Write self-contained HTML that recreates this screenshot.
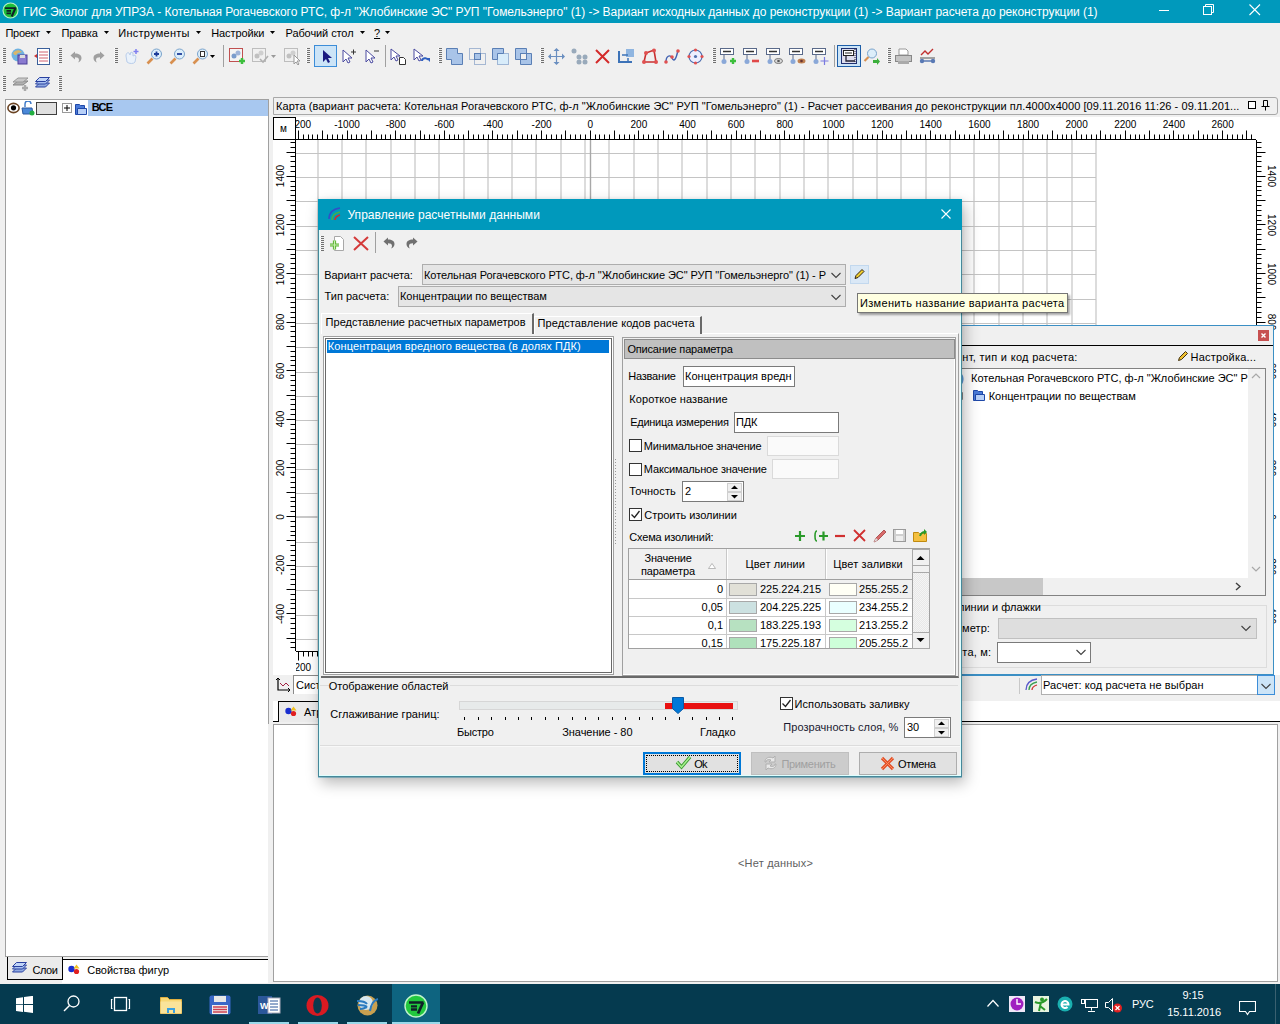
<!DOCTYPE html>
<html><head><meta charset="utf-8"><style>
html,body{margin:0;padding:0}
body{width:1280px;height:1024px;position:relative;overflow:hidden;background:#f0f0f0;font-family:"Liberation Sans",sans-serif;font-size:11px;color:#000}
body>div{position:absolute}
.t{position:absolute;white-space:pre}
</style></head><body>
<div style="left:0px;top:0px;width:1280px;height:23px;background:#0099bc"></div>
<svg style="position:absolute;left:1.5px;top:2px;" width="17" height="17" viewBox="0 0 17 17"><circle cx="8.5" cy="8.5" r="7.5" fill="#1dbf3a" stroke="#b8f0c8" stroke-width="1.1"/><path d="M3 6.2h11M4.5 8.9h4.5M4.5 11.3h4.5" stroke="#102028" stroke-width="1.7"/><path d="M13.5 6l-3.8 8.5" stroke="#102028" stroke-width="2.1"/></svg>
<div class="t " style="left:23px;top:5.84px;font-size:12px;line-height:12px;letter-spacing:-0.059px;color:#fff">ГИС Эколог для УПРЗА - Котельная Рогачевского РТС, ф-л &quot;Жлобинские ЭС&quot; РУП &quot;Гомельэнерго&quot; (1) -&gt; Вариант исходных данных до реконструкции (1) -&gt; Вариант расчета до реконструкции (1)</div>
<div style="left:1159px;top:10px;width:10px;height:1px;background:#fff"></div>
<svg style="position:absolute;left:1203px;top:4px;" width="12" height="12" viewBox="0 0 12 12"><rect x="0.5" y="2.5" width="8" height="8" fill="none" stroke="#fff"/><path d="M2.5 2.5V0.5h8v8h-2" fill="none" stroke="#fff"/></svg>
<svg style="position:absolute;left:1249px;top:4px;" width="12" height="12" viewBox="0 0 12 12"><path d="M0.5 0.5L11 11M11 0.5L0.5 11" stroke="#fff" stroke-width="1.1"/></svg>
<div class="t " style="left:5.5px;top:27.69px;font-size:11px;line-height:11px;letter-spacing:-0.322px;">Проект</div>
<svg style="position:absolute;left:46px;top:31px;" width="5" height="3" viewBox="0 0 5 3"><path d="M0 0h5L2.5 3z" fill="#000"/></svg>
<div class="t " style="left:61.4px;top:27.69px;font-size:11px;line-height:11px;letter-spacing:-0.145px;">Правка</div>
<svg style="position:absolute;left:104px;top:31px;" width="5" height="3" viewBox="0 0 5 3"><path d="M0 0h5L2.5 3z" fill="#000"/></svg>
<div class="t " style="left:118.3px;top:27.69px;font-size:11px;line-height:11px;letter-spacing:0.264px;">Инструменты</div>
<svg style="position:absolute;left:196px;top:31px;" width="5" height="3" viewBox="0 0 5 3"><path d="M0 0h5L2.5 3z" fill="#000"/></svg>
<div class="t " style="left:211.2px;top:27.69px;font-size:11px;line-height:11px;letter-spacing:-0.093px;">Настройки</div>
<svg style="position:absolute;left:270px;top:31px;" width="5" height="3" viewBox="0 0 5 3"><path d="M0 0h5L2.5 3z" fill="#000"/></svg>
<div class="t " style="left:285.5px;top:27.69px;font-size:11px;line-height:11px;letter-spacing:-0.089px;">Рабочий стол</div>
<svg style="position:absolute;left:359.5px;top:31px;" width="5" height="3" viewBox="0 0 5 3"><path d="M0 0h5L2.5 3z" fill="#000"/></svg>
<div class="t " style="left:374px;top:27.69px;font-size:11px;line-height:11px;text-decoration:underline">?</div>
<svg style="position:absolute;left:385px;top:31px;" width="5" height="3" viewBox="0 0 5 3"><path d="M0 0h5L2.5 3z" fill="#000"/></svg>
<div style="left:3px;top:48px;width:3px;height:15px;background:repeating-linear-gradient(#707070 0 1px,transparent 1px 2px)"></div>
<div style="left:2px;top:48px;width:1px;height:15px;background:repeating-linear-gradient(#ffffff 0 1px,transparent 1px 2px)"></div>
<svg style="position:absolute;left:11px;top:48px;" width="17" height="17" viewBox="0 0 17 17"><circle cx="7" cy="7" r="6.5" fill="#6fb2e0"/><path d="M2 5c2-3 6-4 9-1-2 1-4 0-5 2s-3 1-4-1z" fill="#d9b66a"/><rect x="7" y="7" width="9" height="9" fill="#8a7ad0" stroke="#4a3e99"/><rect x="9" y="7" width="5" height="3" fill="#ddd"/></svg>
<svg style="position:absolute;left:34px;top:48px;" width="17" height="17" viewBox="0 0 17 17"><rect x="3.5" y="0.5" width="12" height="16" fill="#fff" stroke="#3a5f9a"/><path d="M5 4h9M5 7h9M5 10h9M5 13h9" stroke="#d06070"/><path d="M0 8l3-2v4z" fill="#c33"/></svg>
<div style="left:59px;top:48px;width:3px;height:15px;background:repeating-linear-gradient(#707070 0 1px,transparent 1px 2px)"></div>
<div style="left:58px;top:48px;width:1px;height:15px;background:repeating-linear-gradient(#ffffff 0 1px,transparent 1px 2px)"></div>
<svg style="position:absolute;left:70px;top:51px;" width="12" height="12" viewBox="0 0 12 12"><path d="M5 0.5L0.5 4.5 5 8.5V6.2c2.5 0 4 0.6 4 2.8 0 1-0.5 2-1.2 2.5 3-0.8 3.7-3 3.7-4.5 0-3-2.5-4.5-6.5-4.5z" fill="#a0a0a0"/></svg>
<svg style="position:absolute;left:93px;top:51px;" width="12" height="12" viewBox="0 0 12 12"><path d="M7 0.5l4.5 4L7 8.5V6.2c-2.5 0-4 0.6-4 2.8 0 1 0.5 2 1.2 2.5-3-0.8-3.7-3-3.7-4.5 0-3 2.5-4.5 6.5-4.5z" fill="#a0a0a0"/></svg>
<div style="left:115px;top:48px;width:3px;height:15px;background:repeating-linear-gradient(#707070 0 1px,transparent 1px 2px)"></div>
<div style="left:114px;top:48px;width:1px;height:15px;background:repeating-linear-gradient(#ffffff 0 1px,transparent 1px 2px)"></div>
<svg style="position:absolute;left:123px;top:48px;" width="17" height="17" viewBox="0 0 17 17"><path d="M3 8c0-3 2-4 3-3l1 2 1-3 2 1v3l2-1 1 2-1 5c-1 2-6 2-8 0z" fill="#eaf2fb" stroke="#b9cdea"/><path d="M13 1v5M10.5 3.5h5" stroke="#7f7ff0" stroke-width="1.5"/></svg>
<svg style="position:absolute;left:146px;top:48px;" width="17" height="17" viewBox="0 0 17 17"><path d="M1.5 15.5l5-5" stroke="#d89050" stroke-width="2.6"/><circle cx="10.5" cy="6" r="5" fill="#dceefa" stroke="#7aa3cc"/><path d="M8 6h5M10.5 3.5v5" stroke="#1d3d99" stroke-width="1.8"/></svg>
<svg style="position:absolute;left:169px;top:48px;" width="17" height="17" viewBox="0 0 17 17"><path d="M1.5 15.5l5-5" stroke="#d89050" stroke-width="2.6"/><circle cx="10.5" cy="6" r="5" fill="#dceefa" stroke="#7aa3cc"/><path d="M8 6h5" stroke="#1d3d99" stroke-width="1.8"/></svg>
<svg style="position:absolute;left:192px;top:48px;" width="17" height="17" viewBox="0 0 17 17"><path d="M1.5 15.5l5-5" stroke="#d89050" stroke-width="2.6"/><circle cx="10.5" cy="6" r="5" fill="#dceefa" stroke="#7aa3cc"/><rect x="8.5" y="3.5" width="4" height="5" fill="#fff" stroke="#333"/></svg>
<svg style="position:absolute;left:210px;top:55px;" width="5" height="3" viewBox="0 0 5 3"><path d="M0 0h5L2.5 3z" fill="#000"/></svg>
<div style="left:223px;top:45px;width:1px;height:22px;background:#a0a0a0"></div>
<svg style="position:absolute;left:229px;top:48px;" width="17" height="17" viewBox="0 0 17 17"><rect x="0.5" y="0.5" width="13" height="13" fill="#f4f4f4" stroke="#c05050"/><circle cx="5" cy="8" r="2.5" fill="#7a9ccc"/><circle cx="9" cy="5" r="2.5" fill="#9fb4d9"/><path d="M10 13h6M13 10v6" stroke="#3cbf3c" stroke-width="2.5"/></svg>
<svg style="position:absolute;left:252px;top:48px;" width="17" height="17" viewBox="0 0 17 17"><rect x="0.5" y="0.5" width="13" height="13" fill="#f0f0f0" stroke="#bdbdbd"/><circle cx="5" cy="8" r="2.5" fill="#c0c0c0"/><circle cx="9" cy="5" r="2.5" fill="#cfcfcf"/><path d="M8 11l3 3 5-6" fill="none" stroke="#b0b0b0" stroke-width="1.6"/></svg>
<svg style="position:absolute;left:271px;top:55px;" width="5" height="3" viewBox="0 0 5 3"><path d="M0 0h5L2.5 3z" fill="#999"/></svg>
<svg style="position:absolute;left:284px;top:48px;" width="17" height="17" viewBox="0 0 17 17"><rect x="0.5" y="0.5" width="13" height="13" fill="#f0f0f0" stroke="#bdbdbd"/><circle cx="5" cy="8" r="2.5" fill="#c0c0c0"/><circle cx="9" cy="5" r="2.5" fill="#cfcfcf"/><path d="M10 7v9l2-2 2 3 1-1-2-3h3z" fill="#fff" stroke="#999"/></svg>
<div style="left:307px;top:48px;width:3px;height:15px;background:repeating-linear-gradient(#707070 0 1px,transparent 1px 2px)"></div>
<div style="left:306px;top:48px;width:1px;height:15px;background:repeating-linear-gradient(#ffffff 0 1px,transparent 1px 2px)"></div>
<div style="left:314px;top:45px;width:23px;height:22px;background:#cce4f7;box-sizing:border-box;border:1px solid #3c8dd8;"></div>
<svg style="position:absolute;left:319px;top:48px;" width="17" height="17" viewBox="0 0 17 17"><path d="M4 2v12l3-3 2 4 2-1-2-4h4z" fill="#1a1a80"/></svg>
<svg style="position:absolute;left:341px;top:48px;" width="17" height="17" viewBox="0 0 17 17"><path d="M2 2v12l3-3 2 4 2-1-2-4h4z" fill="#fff" stroke="#4a4aa0"/><path d="M10 4h5M12.5 1.5v5" stroke="#333"/></svg>
<svg style="position:absolute;left:364px;top:48px;" width="17" height="17" viewBox="0 0 17 17"><path d="M2 2v12l3-3 2 4 2-1-2-4h4z" fill="#fff" stroke="#4a4aa0"/><path d="M10 3h5" stroke="#333"/></svg>
<div style="left:385px;top:45px;width:1px;height:22px;background:#a0a0a0"></div>
<svg style="position:absolute;left:390px;top:48px;" width="17" height="17" viewBox="0 0 17 17"><path d="M1 1v11l3-3 2 4 2-1-2-4h4z" fill="#fff" stroke="#4a4aa0"/><path d="M9.5 9.5h4l2 2v5h-6z" fill="#fff" stroke="#333"/></svg>
<svg style="position:absolute;left:413px;top:48px;" width="17" height="17" viewBox="0 0 17 17"><path d="M1 1v11l3-3 2 4 2-1-2-4h4z" fill="#fff" stroke="#4a4aa0"/><path d="M9 13c0-3 5-4 6-1" fill="none" stroke="#3060c0" stroke-width="2"/><path d="M13 10h4v4z" fill="#3060c0"/></svg>
<div style="left:439px;top:48px;width:3px;height:15px;background:repeating-linear-gradient(#707070 0 1px,transparent 1px 2px)"></div>
<div style="left:438px;top:48px;width:1px;height:15px;background:repeating-linear-gradient(#ffffff 0 1px,transparent 1px 2px)"></div>
<svg style="position:absolute;left:446px;top:48px;" width="18" height="18" viewBox="0 0 18 18"><path d="M0.5 0.5h11v5h5v11h-11v-5h-5z" fill="#a9c4e8" stroke="#5a7fb5"/></svg>
<svg style="position:absolute;left:469px;top:48px;" width="18" height="18" viewBox="0 0 18 18"><rect x="0.5" y="0.5" width="11" height="11" fill="none" stroke="#5a7fb5" stroke-dasharray="1 1"/><rect x="5.5" y="5.5" width="11" height="11" fill="none" stroke="#5a7fb5" stroke-dasharray="1 1"/><rect x="5.5" y="5.5" width="6" height="6" fill="#a9c4e8" stroke="#5a7fb5"/></svg>
<svg style="position:absolute;left:492px;top:48px;" width="18" height="18" viewBox="0 0 18 18"><rect x="5.5" y="5.5" width="11" height="11" fill="#d8ecfa" stroke="#5a7fb5" stroke-dasharray="1 1"/><path d="M0.5 0.5h11v5h-6v6h-5z" fill="#a9c4e8" stroke="#5a7fb5"/></svg>
<svg style="position:absolute;left:515px;top:48px;" width="18" height="18" viewBox="0 0 18 18"><path d="M0.5 0.5h11v5h5v11h-11v-5h-5z" fill="#a9c4e8" stroke="#5a7fb5"/><rect x="5.5" y="5.5" width="6" height="6" fill="#f0f0f0" stroke="#5a7fb5"/></svg>
<div style="left:541px;top:48px;width:3px;height:15px;background:repeating-linear-gradient(#707070 0 1px,transparent 1px 2px)"></div>
<div style="left:540px;top:48px;width:1px;height:15px;background:repeating-linear-gradient(#ffffff 0 1px,transparent 1px 2px)"></div>
<svg style="position:absolute;left:548px;top:48px;" width="17" height="17" viewBox="0 0 17 17"><path d="M8.5 1v15M1 8.5h15" stroke="#6a8fc0" stroke-width="1.2"/><path d="M8.5 0l-3 3h6zM8.5 17l-3-3h6zM0 8.5l3-3v6zM17 8.5l-3-3v6z" fill="#6a8fc0"/></svg>
<svg style="position:absolute;left:571px;top:48px;" width="17" height="17" viewBox="0 0 17 17"><circle cx="3" cy="3" r="2.5" fill="#9ab"/><circle cx="8" cy="9" r="2.5" fill="#9ab"/><circle cx="14" cy="9" r="2.5" fill="#9ab"/><circle cx="8" cy="14" r="2.5" fill="#9ab"/><circle cx="14" cy="14" r="2.5" fill="#9ab"/></svg>
<svg style="position:absolute;left:594px;top:48px;" width="17" height="17" viewBox="0 0 17 17"><path d="M2 2l13 13M15 2L2 15" stroke="#d42a2a" stroke-width="2"/></svg>
<svg style="position:absolute;left:618px;top:48px;" width="17" height="17" viewBox="0 0 17 17"><path d="M1 3v11h13" fill="none" stroke="#3d73b8" stroke-width="2"/><rect x="8" y="1" width="8" height="8" fill="#8fb5e0"/><path d="M4 7h6M10 10v5" stroke="#3d73b8" stroke-width="1.5"/></svg>
<svg style="position:absolute;left:641px;top:48px;" width="17" height="17" viewBox="0 0 17 17"><path d="M3 14l2-9 8-3 2 12z" fill="none" stroke="#c83030" stroke-width="1.6"/><circle cx="3" cy="14" r="2" fill="#e05050"/><circle cx="5" cy="5" r="2" fill="#e05050"/><circle cx="13" cy="2.5" r="2" fill="#e05050"/><circle cx="15" cy="14" r="2" fill="#e05050"/></svg>
<svg style="position:absolute;left:664px;top:48px;" width="17" height="17" viewBox="0 0 17 17"><path d="M2 14c0-6 4-8 6-4s4 2 6-8" fill="none" stroke="#4060b0" stroke-width="1.4"/><circle cx="2" cy="14" r="1.8" fill="#e05050"/><circle cx="8" cy="9" r="1.8" fill="#e05050"/><circle cx="14" cy="3" r="1.8" fill="#e05050"/></svg>
<svg style="position:absolute;left:687px;top:48px;" width="17" height="17" viewBox="0 0 17 17"><circle cx="8.5" cy="8.5" r="6.5" fill="#eef" stroke="#5070b0" stroke-width="1.2"/><circle cx="8.5" cy="2" r="1.6" fill="#e05050"/><circle cx="8.5" cy="15" r="1.6" fill="#e05050"/><circle cx="2" cy="8.5" r="1.6" fill="#e05050"/><circle cx="15" cy="8.5" r="1.6" fill="#e05050"/><circle cx="8.5" cy="8.5" r="1.6" fill="#5070b0"/></svg>
<div style="left:713px;top:48px;width:3px;height:15px;background:repeating-linear-gradient(#707070 0 1px,transparent 1px 2px)"></div>
<div style="left:712px;top:48px;width:1px;height:15px;background:repeating-linear-gradient(#ffffff 0 1px,transparent 1px 2px)"></div>
<svg style="position:absolute;left:720px;top:48px;" width="17" height="17" viewBox="0 0 17 17"><rect x="0.5" y="0.5" width="13" height="6" fill="#fff" stroke="#5a6a8a"/><path d="M3 3.5h8" stroke="#333" stroke-width="1.5"/><path d="M4 7v6" stroke="#5a6a8a"/><circle cx="4" cy="13.5" r="2.5" fill="#8aa8d8"/><path d="M10 13h6M13 10v6" stroke="#3cbf3c" stroke-width="2.4"/></svg>
<svg style="position:absolute;left:743px;top:48px;" width="17" height="17" viewBox="0 0 17 17"><rect x="0.5" y="0.5" width="13" height="6" fill="#fff" stroke="#5a6a8a"/><path d="M3 3.5h8" stroke="#333" stroke-width="1.5"/><path d="M4 7v6" stroke="#5a6a8a"/><circle cx="4" cy="13.5" r="2.5" fill="#8aa8d8"/><path d="M9 13h7" stroke="#e04848" stroke-width="2.6"/></svg>
<svg style="position:absolute;left:766px;top:48px;" width="17" height="17" viewBox="0 0 17 17"><rect x="0.5" y="0.5" width="13" height="6" fill="#fff" stroke="#5a6a8a"/><path d="M3 3.5h8" stroke="#333" stroke-width="1.5"/><path d="M4 7v6" stroke="#5a6a8a"/><circle cx="4" cy="13.5" r="2.5" fill="#8aa8d8"/><ellipse cx="12.5" cy="13" rx="4" ry="2.5" fill="#ddd" stroke="#777"/><circle cx="12.5" cy="13" r="1.3" fill="#555"/></svg>
<svg style="position:absolute;left:789px;top:48px;" width="17" height="17" viewBox="0 0 17 17"><rect x="0.5" y="0.5" width="13" height="6" fill="#fff" stroke="#5a6a8a"/><path d="M3 3.5h8" stroke="#333" stroke-width="1.5"/><path d="M4 7v6" stroke="#5a6a8a"/><circle cx="4" cy="13.5" r="2.5" fill="#8aa8d8"/><ellipse cx="12.5" cy="13" rx="4" ry="2.5" fill="#c08050"/><circle cx="12.5" cy="13" r="1.3" fill="#633"/></svg>
<svg style="position:absolute;left:812px;top:48px;" width="17" height="17" viewBox="0 0 17 17"><rect x="0.5" y="0.5" width="13" height="6" fill="#fff" stroke="#5a6a8a"/><path d="M3 3.5h8" stroke="#333" stroke-width="1.5"/><path d="M4 7v6" stroke="#5a6a8a"/><circle cx="4" cy="13.5" r="2.5" fill="#8aa8d8"/><path d="M12.5 9v8M8.5 13h8" stroke="#7a7ae0" stroke-width="1.2"/></svg>
<div style="left:834px;top:45px;width:1px;height:22px;background:#a0a0a0"></div>
<div style="left:837px;top:45px;width:24px;height:22px;background:#cce4f7;box-sizing:border-box;border:1px solid #1d5ea8;"></div>
<svg style="position:absolute;left:841px;top:48px;" width="17" height="17" viewBox="0 0 17 17"><rect x="0.5" y="0.5" width="15" height="15" fill="#dde" stroke="#1d2f70"/><rect x="2.5" y="2.5" width="10" height="5" fill="#fff" stroke="#222"/><path d="M4 5h7" stroke="#222"/><path d="M5 8v5h9" fill="none" stroke="#223" stroke-width="1.3"/><path d="M14 1v14" stroke="#223" stroke-dasharray="1 1"/></svg>
<svg style="position:absolute;left:863px;top:48px;" width="17" height="17" viewBox="0 0 17 17"><circle cx="9" cy="5.5" r="4.5" fill="#dceefa" stroke="#7aa3cc"/><path d="M1.5 13l4-4" stroke="#d89050" stroke-width="2.2"/><path d="M10 12h4v-2l3 3.5-3 3.5v-2h-4z" fill="#3caf3c"/></svg>
<div style="left:888px;top:48px;width:3px;height:15px;background:repeating-linear-gradient(#707070 0 1px,transparent 1px 2px)"></div>
<div style="left:887px;top:48px;width:1px;height:15px;background:repeating-linear-gradient(#ffffff 0 1px,transparent 1px 2px)"></div>
<svg style="position:absolute;left:895px;top:48px;" width="17" height="17" viewBox="0 0 17 17"><path d="M4 1h7l2 2v4H4z" fill="#fff" stroke="#999"/><rect x="0.5" y="7.5" width="16" height="6" fill="#c4c4c4" stroke="#888"/><rect x="3" y="13" width="11" height="3" fill="#aaa"/></svg>
<svg style="position:absolute;left:919px;top:48px;" width="17" height="17" viewBox="0 0 17 17"><path d="M1 10h15" stroke="#555"/><path d="M2 7l4-4 3 3 5-5" fill="none" stroke="#c03030" stroke-width="1.4"/><circle cx="3" cy="13" r="2.2" fill="#5a7ab5"/><circle cx="14" cy="13" r="2.2" fill="#5a7ab5"/><path d="M3 13h11" stroke="#5a7ab5" stroke-width="1.5"/></svg>
<div style="left:3px;top:76px;width:3px;height:15px;background:repeating-linear-gradient(#707070 0 1px,transparent 1px 2px)"></div>
<div style="left:2px;top:76px;width:1px;height:15px;background:repeating-linear-gradient(#ffffff 0 1px,transparent 1px 2px)"></div>
<svg style="position:absolute;left:12px;top:76px;" width="17" height="15" viewBox="0 0 17 15"><path d="M1 9l5-4h10l-5 4z" fill="#b0b0b0" stroke="#888"/><path d="M1 6l5-4h10l-5 4z" fill="#c8c8c8" stroke="#999"/><path d="M10 12h6M13 9v6" stroke="#aaa" stroke-width="2.5"/></svg>
<svg style="position:absolute;left:35px;top:77px;" width="15" height="13" viewBox="0 0 15 13"><path d="M0.5 10l4-4h10l-4 4z" fill="#8fa8e0" stroke="#2940a0"/><path d="M0.5 7l4-4h10l-4 4z" fill="#a8c0f0" stroke="#2940a0"/><path d="M0.5 4.5l4-4h10l-4 4z" fill="#c0d4f8" stroke="#2940a0"/></svg>
<div style="left:59px;top:76px;width:3px;height:15px;background:repeating-linear-gradient(#707070 0 1px,transparent 1px 2px)"></div>
<div style="left:58px;top:76px;width:1px;height:15px;background:repeating-linear-gradient(#ffffff 0 1px,transparent 1px 2px)"></div>
<div style="left:5px;top:99px;width:264px;height:858px;background:#fff;box-sizing:border-box;border:1px solid #a0a0a0;"></div>
<svg style="position:absolute;left:7px;top:102px;" width="13" height="12" viewBox="0 0 13 12"><ellipse cx="6.5" cy="6" rx="5.6" ry="4.6" fill="#fff" stroke="#6b4424" stroke-width="1.6"/><circle cx="6.5" cy="5.8" r="2.6" fill="#000"/></svg>
<svg style="position:absolute;left:21px;top:101px;" width="14" height="15" viewBox="0 0 14 15"><path d="M4 6V3a3 3 0 0 1 6 0" fill="none" stroke="#3a78c8" stroke-width="1.4"/><path d="M1 7h10l1 6H2z" fill="#4a88d8" stroke="#2a58a0"/><circle cx="11" cy="12" r="2.5" fill="#22b040"/></svg>
<div style="left:36px;top:102px;width:21px;height:13px;background:#e0e0e0;box-sizing:border-box;border:1px solid #404040;"></div>
<div style="left:62px;top:103px;width:10px;height:10px;background:#fff;box-sizing:border-box;border:1px solid #9a9a9a;"></div>
<svg style="position:absolute;left:62px;top:103px;" width="10" height="10" viewBox="0 0 10 10"><path d="M2 5h6M5 2v6" stroke="#000" stroke-width="1"/></svg>
<svg style="position:absolute;left:75px;top:103px;" width="12" height="12" viewBox="0 0 12 12"><path d="M0.5 1.5h4l1 1h4v9h-9z" fill="#4a7ad8" stroke="#1f48a8"/><path d="M2.5 5.5h9v6h-9z" fill="#b8d0f8" stroke="#1f48a8"/></svg>
<div style="left:88px;top:100px;width:180px;height:16px;background:#a8c8f0"></div>
<div class="t " style="left:91.8px;top:101.69px;font-size:11px;line-height:11px;letter-spacing:-0.771px;font-weight:bold;">ВСЕ</div>
<div style="left:62px;top:960px;width:206px;height:23px;background:#fff"></div>
<div style="left:62px;top:959px;width:206px;height:1px;background:#000"></div>
<div style="left:7px;top:957px;width:56px;height:23px;background:#ebebeb;box-sizing:border-box;border:1px solid #000;border-top:none"></div>
<svg style="position:absolute;left:12px;top:962px;" width="15" height="13" viewBox="0 0 15 13"><path d="M0.5 10l4-4h10l-4 4z" fill="#8fa8e0" stroke="#2940a0"/><path d="M0.5 7l4-4h10l-4 4z" fill="#a8c0f0" stroke="#2940a0"/><path d="M0.5 4.5l4-4h10l-4 4z" fill="#c0d4f8" stroke="#2940a0"/></svg>
<div class="t " style="left:32.5px;top:964.69px;font-size:11px;line-height:11px;letter-spacing:-0.487px;">Слои</div>
<svg style="position:absolute;left:68px;top:964px;" width="12" height="12" viewBox="0 0 12 12"><circle cx="3.5" cy="5" r="3.2" fill="#1a2fd0"/><circle cx="8.5" cy="7.5" r="2.6" fill="#e02020"/><path d="M8.5 0.5l3 4h-6z" fill="#f0c020"/></svg>
<div class="t " style="left:87.2px;top:964.69px;font-size:11px;line-height:11px;letter-spacing:-0.004px;">Свойства фигур</div>
<div style="left:273px;top:97px;width:1005px;height:18px;background:#f0f0f0;box-sizing:border-box;border:1px solid #a8a8a8;border-radius:0 3px 3px 0"></div>
<div class="t " style="left:276px;top:100.69px;font-size:11px;line-height:11px;letter-spacing:0.058px;">Карта (вариант расчета: Котельная Рогачевского РТС, ф-л &quot;Жлобинские ЭС&quot; РУП &quot;Гомельэнерго&quot; (1) - Расчет рассеивания до реконструкции пл.4000x4000 [09.11.2016 11:26 - 09.11.201...</div>
<div style="left:1248px;top:101px;width:8px;height:8px;background:#fff;box-sizing:border-box;border:1px solid #000;"></div>
<svg style="position:absolute;left:1261px;top:100px;" width="9" height="11" viewBox="0 0 9 11"><path d="M2.5 0.5h4v6h-4zM0.5 6.5h8M4.5 6.5v4" fill="none" stroke="#000"/></svg>
<div style="left:273px;top:117px;width:1007px;height:558px;background:#fff"></div>
<svg style="position:absolute;left:0px;top:0px;pointer-events:none" width="1280" height="700" viewBox="0 0 1280 700"><g stroke="#c4c4c4" stroke-width="1"><path d="M318 140V651" stroke="#dcdcdc" stroke-width="2"/><path d="M342 140V651" stroke="#dcdcdc" stroke-width="2"/><path d="M366 140V651" stroke="#dcdcdc" stroke-width="2"/><path d="M391 140V651" stroke="#dcdcdc" stroke-width="2"/><path d="M415 140V651" stroke="#dcdcdc" stroke-width="2"/><path d="M439 140V651" stroke="#dcdcdc" stroke-width="2"/><path d="M464 140V651" stroke="#dcdcdc" stroke-width="2"/><path d="M488 140V651" stroke="#dcdcdc" stroke-width="2"/><path d="M512 140V651" stroke="#dcdcdc" stroke-width="2"/><path d="M536 140V651" stroke="#dcdcdc" stroke-width="2"/><path d="M561 140V651" stroke="#dcdcdc" stroke-width="2"/><path d="M585 140V651" stroke="#dcdcdc" stroke-width="2"/><path d="M609 140V651" stroke="#dcdcdc" stroke-width="2"/><path d="M634 140V651" stroke="#dcdcdc" stroke-width="2"/><path d="M658 140V651" stroke="#dcdcdc" stroke-width="2"/><path d="M682 140V651" stroke="#dcdcdc" stroke-width="2"/><path d="M707 140V651" stroke="#dcdcdc" stroke-width="2"/><path d="M731 140V651" stroke="#dcdcdc" stroke-width="2"/><path d="M755 140V651" stroke="#dcdcdc" stroke-width="2"/><path d="M780 140V651" stroke="#dcdcdc" stroke-width="2"/><path d="M804 140V651" stroke="#dcdcdc" stroke-width="2"/><path d="M828 140V651" stroke="#dcdcdc" stroke-width="2"/><path d="M853 140V651" stroke="#dcdcdc" stroke-width="2"/><path d="M877 140V651" stroke="#dcdcdc" stroke-width="2"/><path d="M901 140V651" stroke="#dcdcdc" stroke-width="2"/><path d="M926 140V651" stroke="#dcdcdc" stroke-width="2"/><path d="M950 140V651" stroke="#dcdcdc" stroke-width="2"/><path d="M974 140V651" stroke="#dcdcdc" stroke-width="2"/><path d="M999 140V651" stroke="#dcdcdc" stroke-width="2"/><path d="M1023 140V651" stroke="#dcdcdc" stroke-width="2"/><path d="M1047 140V651" stroke="#dcdcdc" stroke-width="2"/><path d="M1072 140V651" stroke="#dcdcdc" stroke-width="2"/><path d="M1096 140V651" stroke="#dcdcdc" stroke-width="2"/><path d="M296 153.5H1096" /><path d="M296 177.5H1096" /><path d="M296 201.5H1096" /><path d="M296 226.5H1096" /><path d="M296 250.5H1096" /><path d="M296 274.5H1096" /><path d="M296 299.5H1096" /><path d="M296 323.5H1096" /><path d="M296 347.5H1096" /><path d="M296 372.5H1096" /><path d="M296 396.5H1096" /><path d="M296 420.5H1096" /><path d="M296 444.5H1096" /><path d="M296 469.5H1096" /><path d="M296 493.5H1096" /><path d="M296 517.5H1096" /><path d="M296 542.5H1096" /><path d="M296 566.5H1096" /><path d="M296 590.5H1096" /><path d="M296 615.5H1096" /><path d="M296 639.5H1096" /><path d="M590.5 140V651" stroke="#a8a8a8" stroke-width="1.4"/><path d="M296 517H1096" stroke="#c8c8c8" stroke-width="2"/></g></svg>
<svg style="position:absolute;left:0px;top:0px;pointer-events:none" width="1280" height="700" viewBox="0 0 1280 700"><path d="M296 139.5H1256" stroke="#000"/><path d="M298.5 130.5V139.5" stroke="#000"/><path d="M303.5 134.5V139.5" stroke="#000"/><path d="M308.5 134.5V139.5" stroke="#000"/><path d="M312.5 134.5V139.5" stroke="#000"/><path d="M317.5 134.5V139.5" stroke="#000"/><path d="M322.5 130.5V139.5" stroke="#000"/><path d="M327.5 134.5V139.5" stroke="#000"/><path d="M332.5 134.5V139.5" stroke="#000"/><path d="M337.5 134.5V139.5" stroke="#000"/><path d="M342.5 134.5V139.5" stroke="#000"/><path d="M347.5 130.5V139.5" stroke="#000"/><path d="M351.5 134.5V139.5" stroke="#000"/><path d="M356.5 134.5V139.5" stroke="#000"/><path d="M361.5 134.5V139.5" stroke="#000"/><path d="M366.5 134.5V139.5" stroke="#000"/><path d="M371.5 130.5V139.5" stroke="#000"/><path d="M376.5 134.5V139.5" stroke="#000"/><path d="M381.5 134.5V139.5" stroke="#000"/><path d="M385.5 134.5V139.5" stroke="#000"/><path d="M390.5 134.5V139.5" stroke="#000"/><path d="M395.5 130.5V139.5" stroke="#000"/><path d="M400.5 134.5V139.5" stroke="#000"/><path d="M405.5 134.5V139.5" stroke="#000"/><path d="M410.5 134.5V139.5" stroke="#000"/><path d="M415.5 134.5V139.5" stroke="#000"/><path d="M420.5 130.5V139.5" stroke="#000"/><path d="M424.5 134.5V139.5" stroke="#000"/><path d="M429.5 134.5V139.5" stroke="#000"/><path d="M434.5 134.5V139.5" stroke="#000"/><path d="M439.5 134.5V139.5" stroke="#000"/><path d="M444.5 130.5V139.5" stroke="#000"/><path d="M449.5 134.5V139.5" stroke="#000"/><path d="M454.5 134.5V139.5" stroke="#000"/><path d="M458.5 134.5V139.5" stroke="#000"/><path d="M463.5 134.5V139.5" stroke="#000"/><path d="M468.5 130.5V139.5" stroke="#000"/><path d="M473.5 134.5V139.5" stroke="#000"/><path d="M478.5 134.5V139.5" stroke="#000"/><path d="M483.5 134.5V139.5" stroke="#000"/><path d="M488.5 134.5V139.5" stroke="#000"/><path d="M492.5 130.5V139.5" stroke="#000"/><path d="M497.5 134.5V139.5" stroke="#000"/><path d="M502.5 134.5V139.5" stroke="#000"/><path d="M507.5 134.5V139.5" stroke="#000"/><path d="M512.5 134.5V139.5" stroke="#000"/><path d="M517.5 130.5V139.5" stroke="#000"/><path d="M522.5 134.5V139.5" stroke="#000"/><path d="M527.5 134.5V139.5" stroke="#000"/><path d="M531.5 134.5V139.5" stroke="#000"/><path d="M536.5 134.5V139.5" stroke="#000"/><path d="M541.5 130.5V139.5" stroke="#000"/><path d="M546.5 134.5V139.5" stroke="#000"/><path d="M551.5 134.5V139.5" stroke="#000"/><path d="M556.5 134.5V139.5" stroke="#000"/><path d="M561.5 134.5V139.5" stroke="#000"/><path d="M565.5 130.5V139.5" stroke="#000"/><path d="M570.5 134.5V139.5" stroke="#000"/><path d="M575.5 134.5V139.5" stroke="#000"/><path d="M580.5 134.5V139.5" stroke="#000"/><path d="M585.5 134.5V139.5" stroke="#000"/><path d="M590.5 130.5V139.5" stroke="#000"/><path d="M595.5 134.5V139.5" stroke="#000"/><path d="M599.5 134.5V139.5" stroke="#000"/><path d="M604.5 134.5V139.5" stroke="#000"/><path d="M609.5 134.5V139.5" stroke="#000"/><path d="M614.5 130.5V139.5" stroke="#000"/><path d="M619.5 134.5V139.5" stroke="#000"/><path d="M624.5 134.5V139.5" stroke="#000"/><path d="M629.5 134.5V139.5" stroke="#000"/><path d="M634.5 134.5V139.5" stroke="#000"/><path d="M638.5 130.5V139.5" stroke="#000"/><path d="M643.5 134.5V139.5" stroke="#000"/><path d="M648.5 134.5V139.5" stroke="#000"/><path d="M653.5 134.5V139.5" stroke="#000"/><path d="M658.5 134.5V139.5" stroke="#000"/><path d="M663.5 130.5V139.5" stroke="#000"/><path d="M668.5 134.5V139.5" stroke="#000"/><path d="M672.5 134.5V139.5" stroke="#000"/><path d="M677.5 134.5V139.5" stroke="#000"/><path d="M682.5 134.5V139.5" stroke="#000"/><path d="M687.5 130.5V139.5" stroke="#000"/><path d="M692.5 134.5V139.5" stroke="#000"/><path d="M697.5 134.5V139.5" stroke="#000"/><path d="M702.5 134.5V139.5" stroke="#000"/><path d="M706.5 134.5V139.5" stroke="#000"/><path d="M711.5 130.5V139.5" stroke="#000"/><path d="M716.5 134.5V139.5" stroke="#000"/><path d="M721.5 134.5V139.5" stroke="#000"/><path d="M726.5 134.5V139.5" stroke="#000"/><path d="M731.5 134.5V139.5" stroke="#000"/><path d="M736.5 130.5V139.5" stroke="#000"/><path d="M741.5 134.5V139.5" stroke="#000"/><path d="M745.5 134.5V139.5" stroke="#000"/><path d="M750.5 134.5V139.5" stroke="#000"/><path d="M755.5 134.5V139.5" stroke="#000"/><path d="M760.5 130.5V139.5" stroke="#000"/><path d="M765.5 134.5V139.5" stroke="#000"/><path d="M770.5 134.5V139.5" stroke="#000"/><path d="M775.5 134.5V139.5" stroke="#000"/><path d="M779.5 134.5V139.5" stroke="#000"/><path d="M784.5 130.5V139.5" stroke="#000"/><path d="M789.5 134.5V139.5" stroke="#000"/><path d="M794.5 134.5V139.5" stroke="#000"/><path d="M799.5 134.5V139.5" stroke="#000"/><path d="M804.5 134.5V139.5" stroke="#000"/><path d="M809.5 130.5V139.5" stroke="#000"/><path d="M813.5 134.5V139.5" stroke="#000"/><path d="M818.5 134.5V139.5" stroke="#000"/><path d="M823.5 134.5V139.5" stroke="#000"/><path d="M828.5 134.5V139.5" stroke="#000"/><path d="M833.5 130.5V139.5" stroke="#000"/><path d="M838.5 134.5V139.5" stroke="#000"/><path d="M843.5 134.5V139.5" stroke="#000"/><path d="M848.5 134.5V139.5" stroke="#000"/><path d="M852.5 134.5V139.5" stroke="#000"/><path d="M857.5 130.5V139.5" stroke="#000"/><path d="M862.5 134.5V139.5" stroke="#000"/><path d="M867.5 134.5V139.5" stroke="#000"/><path d="M872.5 134.5V139.5" stroke="#000"/><path d="M877.5 134.5V139.5" stroke="#000"/><path d="M882.5 130.5V139.5" stroke="#000"/><path d="M886.5 134.5V139.5" stroke="#000"/><path d="M891.5 134.5V139.5" stroke="#000"/><path d="M896.5 134.5V139.5" stroke="#000"/><path d="M901.5 134.5V139.5" stroke="#000"/><path d="M906.5 130.5V139.5" stroke="#000"/><path d="M911.5 134.5V139.5" stroke="#000"/><path d="M916.5 134.5V139.5" stroke="#000"/><path d="M920.5 134.5V139.5" stroke="#000"/><path d="M925.5 134.5V139.5" stroke="#000"/><path d="M930.5 130.5V139.5" stroke="#000"/><path d="M935.5 134.5V139.5" stroke="#000"/><path d="M940.5 134.5V139.5" stroke="#000"/><path d="M945.5 134.5V139.5" stroke="#000"/><path d="M950.5 134.5V139.5" stroke="#000"/><path d="M955.5 130.5V139.5" stroke="#000"/><path d="M959.5 134.5V139.5" stroke="#000"/><path d="M964.5 134.5V139.5" stroke="#000"/><path d="M969.5 134.5V139.5" stroke="#000"/><path d="M974.5 134.5V139.5" stroke="#000"/><path d="M979.5 130.5V139.5" stroke="#000"/><path d="M984.5 134.5V139.5" stroke="#000"/><path d="M989.5 134.5V139.5" stroke="#000"/><path d="M993.5 134.5V139.5" stroke="#000"/><path d="M998.5 134.5V139.5" stroke="#000"/><path d="M1003.5 130.5V139.5" stroke="#000"/><path d="M1008.5 134.5V139.5" stroke="#000"/><path d="M1013.5 134.5V139.5" stroke="#000"/><path d="M1018.5 134.5V139.5" stroke="#000"/><path d="M1023.5 134.5V139.5" stroke="#000"/><path d="M1028.5 130.5V139.5" stroke="#000"/><path d="M1032.5 134.5V139.5" stroke="#000"/><path d="M1037.5 134.5V139.5" stroke="#000"/><path d="M1042.5 134.5V139.5" stroke="#000"/><path d="M1047.5 134.5V139.5" stroke="#000"/><path d="M1052.5 130.5V139.5" stroke="#000"/><path d="M1057.5 134.5V139.5" stroke="#000"/><path d="M1062.5 134.5V139.5" stroke="#000"/><path d="M1066.5 134.5V139.5" stroke="#000"/><path d="M1071.5 134.5V139.5" stroke="#000"/><path d="M1076.5 130.5V139.5" stroke="#000"/><path d="M1081.5 134.5V139.5" stroke="#000"/><path d="M1086.5 134.5V139.5" stroke="#000"/><path d="M1091.5 134.5V139.5" stroke="#000"/><path d="M1096.5 134.5V139.5" stroke="#000"/><path d="M1100.5 130.5V139.5" stroke="#000"/><path d="M1105.5 134.5V139.5" stroke="#000"/><path d="M1110.5 134.5V139.5" stroke="#000"/><path d="M1115.5 134.5V139.5" stroke="#000"/><path d="M1120.5 134.5V139.5" stroke="#000"/><path d="M1125.5 130.5V139.5" stroke="#000"/><path d="M1130.5 134.5V139.5" stroke="#000"/><path d="M1135.5 134.5V139.5" stroke="#000"/><path d="M1139.5 134.5V139.5" stroke="#000"/><path d="M1144.5 134.5V139.5" stroke="#000"/><path d="M1149.5 130.5V139.5" stroke="#000"/><path d="M1154.5 134.5V139.5" stroke="#000"/><path d="M1159.5 134.5V139.5" stroke="#000"/><path d="M1164.5 134.5V139.5" stroke="#000"/><path d="M1169.5 134.5V139.5" stroke="#000"/><path d="M1173.5 130.5V139.5" stroke="#000"/><path d="M1178.5 134.5V139.5" stroke="#000"/><path d="M1183.5 134.5V139.5" stroke="#000"/><path d="M1188.5 134.5V139.5" stroke="#000"/><path d="M1193.5 134.5V139.5" stroke="#000"/><path d="M1198.5 130.5V139.5" stroke="#000"/><path d="M1203.5 134.5V139.5" stroke="#000"/><path d="M1207.5 134.5V139.5" stroke="#000"/><path d="M1212.5 134.5V139.5" stroke="#000"/><path d="M1217.5 134.5V139.5" stroke="#000"/><path d="M1222.5 130.5V139.5" stroke="#000"/><path d="M1227.5 134.5V139.5" stroke="#000"/><path d="M1232.5 134.5V139.5" stroke="#000"/><path d="M1237.5 134.5V139.5" stroke="#000"/><path d="M1242.5 134.5V139.5" stroke="#000"/><path d="M1246.5 130.5V139.5" stroke="#000"/><path d="M1251.5 134.5V139.5" stroke="#000"/></svg>
<div style="left:273px;top:117px;width:23px;height:23px;background:#fff;box-sizing:border-box;border:1px solid #000;"></div>
<div class="t " style="left:280px;top:123.54px;font-size:10px;line-height:10px;">м</div>
<div class="t" style="left:268.4px;top:120px;width:60px;text-align:center;font-size:10px;line-height:10px">-1200</div>
<div class="t" style="left:317.0px;top:120px;width:60px;text-align:center;font-size:10px;line-height:10px">-1000</div>
<div class="t" style="left:365.7px;top:120px;width:60px;text-align:center;font-size:10px;line-height:10px">-800</div>
<div class="t" style="left:414.3px;top:120px;width:60px;text-align:center;font-size:10px;line-height:10px">-600</div>
<div class="t" style="left:463.0px;top:120px;width:60px;text-align:center;font-size:10px;line-height:10px">-400</div>
<div class="t" style="left:511.6px;top:120px;width:60px;text-align:center;font-size:10px;line-height:10px">-200</div>
<div class="t" style="left:560.2px;top:120px;width:60px;text-align:center;font-size:10px;line-height:10px">0</div>
<div class="t" style="left:608.9px;top:120px;width:60px;text-align:center;font-size:10px;line-height:10px">200</div>
<div class="t" style="left:657.5px;top:120px;width:60px;text-align:center;font-size:10px;line-height:10px">400</div>
<div class="t" style="left:706.2px;top:120px;width:60px;text-align:center;font-size:10px;line-height:10px">600</div>
<div class="t" style="left:754.8px;top:120px;width:60px;text-align:center;font-size:10px;line-height:10px">800</div>
<div class="t" style="left:803.4px;top:120px;width:60px;text-align:center;font-size:10px;line-height:10px">1000</div>
<div class="t" style="left:852.1px;top:120px;width:60px;text-align:center;font-size:10px;line-height:10px">1200</div>
<div class="t" style="left:900.7px;top:120px;width:60px;text-align:center;font-size:10px;line-height:10px">1400</div>
<div class="t" style="left:949.4px;top:120px;width:60px;text-align:center;font-size:10px;line-height:10px">1600</div>
<div class="t" style="left:998.0px;top:120px;width:60px;text-align:center;font-size:10px;line-height:10px">1800</div>
<div class="t" style="left:1046.6px;top:120px;width:60px;text-align:center;font-size:10px;line-height:10px">2000</div>
<div class="t" style="left:1095.3px;top:120px;width:60px;text-align:center;font-size:10px;line-height:10px">2200</div>
<div class="t" style="left:1143.9px;top:120px;width:60px;text-align:center;font-size:10px;line-height:10px">2400</div>
<div class="t" style="left:1192.6px;top:120px;width:60px;text-align:center;font-size:10px;line-height:10px">2600</div>
<div style="left:273px;top:117px;width:23px;height:23px;background:#fff;box-sizing:border-box;border:1px solid #000"></div>
<div class="t " style="left:280px;top:123.54px;font-size:10px;line-height:10px;">м</div>
<svg style="position:absolute;left:0px;top:0px;pointer-events:none" width="1280" height="700" viewBox="0 0 1280 700"><path d="M295.5 140V651" stroke="#000"/><path d="M290.5 647.5H295.5" stroke="#000"/><path d="M290.5 642.5H295.5" stroke="#000"/><path d="M286.5 638.5H295.5" stroke="#000"/><path d="M290.5 633.5H295.5" stroke="#000"/><path d="M290.5 628.5H295.5" stroke="#000"/><path d="M290.5 623.5H295.5" stroke="#000"/><path d="M290.5 618.5H295.5" stroke="#000"/><path d="M286.5 613.5H295.5" stroke="#000"/><path d="M290.5 608.5H295.5" stroke="#000"/><path d="M290.5 603.5H295.5" stroke="#000"/><path d="M290.5 599.5H295.5" stroke="#000"/><path d="M290.5 594.5H295.5" stroke="#000"/><path d="M286.5 589.5H295.5" stroke="#000"/><path d="M290.5 584.5H295.5" stroke="#000"/><path d="M290.5 579.5H295.5" stroke="#000"/><path d="M290.5 574.5H295.5" stroke="#000"/><path d="M290.5 569.5H295.5" stroke="#000"/><path d="M286.5 565.5H295.5" stroke="#000"/><path d="M290.5 560.5H295.5" stroke="#000"/><path d="M290.5 555.5H295.5" stroke="#000"/><path d="M290.5 550.5H295.5" stroke="#000"/><path d="M290.5 545.5H295.5" stroke="#000"/><path d="M286.5 540.5H295.5" stroke="#000"/><path d="M290.5 535.5H295.5" stroke="#000"/><path d="M290.5 531.5H295.5" stroke="#000"/><path d="M290.5 526.5H295.5" stroke="#000"/><path d="M290.5 521.5H295.5" stroke="#000"/><path d="M286.5 516.5H295.5" stroke="#000"/><path d="M290.5 511.5H295.5" stroke="#000"/><path d="M290.5 506.5H295.5" stroke="#000"/><path d="M290.5 501.5H295.5" stroke="#000"/><path d="M290.5 497.5H295.5" stroke="#000"/><path d="M286.5 492.5H295.5" stroke="#000"/><path d="M290.5 487.5H295.5" stroke="#000"/><path d="M290.5 482.5H295.5" stroke="#000"/><path d="M290.5 477.5H295.5" stroke="#000"/><path d="M290.5 472.5H295.5" stroke="#000"/><path d="M286.5 467.5H295.5" stroke="#000"/><path d="M290.5 463.5H295.5" stroke="#000"/><path d="M290.5 458.5H295.5" stroke="#000"/><path d="M290.5 453.5H295.5" stroke="#000"/><path d="M290.5 448.5H295.5" stroke="#000"/><path d="M286.5 443.5H295.5" stroke="#000"/><path d="M290.5 438.5H295.5" stroke="#000"/><path d="M290.5 433.5H295.5" stroke="#000"/><path d="M290.5 429.5H295.5" stroke="#000"/><path d="M290.5 424.5H295.5" stroke="#000"/><path d="M286.5 419.5H295.5" stroke="#000"/><path d="M290.5 414.5H295.5" stroke="#000"/><path d="M290.5 409.5H295.5" stroke="#000"/><path d="M290.5 404.5H295.5" stroke="#000"/><path d="M290.5 399.5H295.5" stroke="#000"/><path d="M286.5 395.5H295.5" stroke="#000"/><path d="M290.5 390.5H295.5" stroke="#000"/><path d="M290.5 385.5H295.5" stroke="#000"/><path d="M290.5 380.5H295.5" stroke="#000"/><path d="M290.5 375.5H295.5" stroke="#000"/><path d="M286.5 370.5H295.5" stroke="#000"/><path d="M290.5 365.5H295.5" stroke="#000"/><path d="M290.5 360.5H295.5" stroke="#000"/><path d="M290.5 356.5H295.5" stroke="#000"/><path d="M290.5 351.5H295.5" stroke="#000"/><path d="M286.5 346.5H295.5" stroke="#000"/><path d="M290.5 341.5H295.5" stroke="#000"/><path d="M290.5 336.5H295.5" stroke="#000"/><path d="M290.5 331.5H295.5" stroke="#000"/><path d="M290.5 326.5H295.5" stroke="#000"/><path d="M286.5 322.5H295.5" stroke="#000"/><path d="M290.5 317.5H295.5" stroke="#000"/><path d="M290.5 312.5H295.5" stroke="#000"/><path d="M290.5 307.5H295.5" stroke="#000"/><path d="M290.5 302.5H295.5" stroke="#000"/><path d="M286.5 297.5H295.5" stroke="#000"/><path d="M290.5 292.5H295.5" stroke="#000"/><path d="M290.5 288.5H295.5" stroke="#000"/><path d="M290.5 283.5H295.5" stroke="#000"/><path d="M290.5 278.5H295.5" stroke="#000"/><path d="M286.5 273.5H295.5" stroke="#000"/><path d="M290.5 268.5H295.5" stroke="#000"/><path d="M290.5 263.5H295.5" stroke="#000"/><path d="M290.5 258.5H295.5" stroke="#000"/><path d="M290.5 254.5H295.5" stroke="#000"/><path d="M286.5 249.5H295.5" stroke="#000"/><path d="M290.5 244.5H295.5" stroke="#000"/><path d="M290.5 239.5H295.5" stroke="#000"/><path d="M290.5 234.5H295.5" stroke="#000"/><path d="M290.5 229.5H295.5" stroke="#000"/><path d="M286.5 224.5H295.5" stroke="#000"/><path d="M290.5 220.5H295.5" stroke="#000"/><path d="M290.5 215.5H295.5" stroke="#000"/><path d="M290.5 210.5H295.5" stroke="#000"/><path d="M290.5 205.5H295.5" stroke="#000"/><path d="M286.5 200.5H295.5" stroke="#000"/><path d="M290.5 195.5H295.5" stroke="#000"/><path d="M290.5 190.5H295.5" stroke="#000"/><path d="M290.5 186.5H295.5" stroke="#000"/><path d="M290.5 181.5H295.5" stroke="#000"/><path d="M286.5 176.5H295.5" stroke="#000"/><path d="M290.5 171.5H295.5" stroke="#000"/><path d="M290.5 166.5H295.5" stroke="#000"/><path d="M290.5 161.5H295.5" stroke="#000"/><path d="M290.5 156.5H295.5" stroke="#000"/><path d="M286.5 152.5H295.5" stroke="#000"/><path d="M290.5 147.5H295.5" stroke="#000"/><path d="M290.5 142.5H295.5" stroke="#000"/></svg>
<div class="t" style="left:251px;top:608.7px;width:60px;text-align:center;font-size:10px;line-height:10px;transform:rotate(-90deg);transform-origin:30px 5px">-400</div>
<div class="t" style="left:251px;top:560.1px;width:60px;text-align:center;font-size:10px;line-height:10px;transform:rotate(-90deg);transform-origin:30px 5px">-200</div>
<div class="t" style="left:251px;top:511.5px;width:60px;text-align:center;font-size:10px;line-height:10px;transform:rotate(-90deg);transform-origin:30px 5px">0</div>
<div class="t" style="left:251px;top:462.9px;width:60px;text-align:center;font-size:10px;line-height:10px;transform:rotate(-90deg);transform-origin:30px 5px">200</div>
<div class="t" style="left:251px;top:414.3px;width:60px;text-align:center;font-size:10px;line-height:10px;transform:rotate(-90deg);transform-origin:30px 5px">400</div>
<div class="t" style="left:251px;top:365.7px;width:60px;text-align:center;font-size:10px;line-height:10px;transform:rotate(-90deg);transform-origin:30px 5px">600</div>
<div class="t" style="left:251px;top:317.1px;width:60px;text-align:center;font-size:10px;line-height:10px;transform:rotate(-90deg);transform-origin:30px 5px">800</div>
<div class="t" style="left:251px;top:268.5px;width:60px;text-align:center;font-size:10px;line-height:10px;transform:rotate(-90deg);transform-origin:30px 5px">1000</div>
<div class="t" style="left:251px;top:219.9px;width:60px;text-align:center;font-size:10px;line-height:10px;transform:rotate(-90deg);transform-origin:30px 5px">1200</div>
<div class="t" style="left:251px;top:171.3px;width:60px;text-align:center;font-size:10px;line-height:10px;transform:rotate(-90deg);transform-origin:30px 5px">1400</div>
<svg style="position:absolute;left:0px;top:0px;pointer-events:none" width="1280" height="700" viewBox="0 0 1280 700"><path d="M1256.5 140V651" stroke="#000"/><path d="M1256.5 647.5H1261.5" stroke="#000"/><path d="M1256.5 642.5H1261.5" stroke="#000"/><path d="M1256.5 638.5H1265.5" stroke="#000"/><path d="M1256.5 633.5H1261.5" stroke="#000"/><path d="M1256.5 628.5H1261.5" stroke="#000"/><path d="M1256.5 623.5H1261.5" stroke="#000"/><path d="M1256.5 618.5H1261.5" stroke="#000"/><path d="M1256.5 613.5H1265.5" stroke="#000"/><path d="M1256.5 608.5H1261.5" stroke="#000"/><path d="M1256.5 603.5H1261.5" stroke="#000"/><path d="M1256.5 599.5H1261.5" stroke="#000"/><path d="M1256.5 594.5H1261.5" stroke="#000"/><path d="M1256.5 589.5H1265.5" stroke="#000"/><path d="M1256.5 584.5H1261.5" stroke="#000"/><path d="M1256.5 579.5H1261.5" stroke="#000"/><path d="M1256.5 574.5H1261.5" stroke="#000"/><path d="M1256.5 569.5H1261.5" stroke="#000"/><path d="M1256.5 565.5H1265.5" stroke="#000"/><path d="M1256.5 560.5H1261.5" stroke="#000"/><path d="M1256.5 555.5H1261.5" stroke="#000"/><path d="M1256.5 550.5H1261.5" stroke="#000"/><path d="M1256.5 545.5H1261.5" stroke="#000"/><path d="M1256.5 540.5H1265.5" stroke="#000"/><path d="M1256.5 535.5H1261.5" stroke="#000"/><path d="M1256.5 531.5H1261.5" stroke="#000"/><path d="M1256.5 526.5H1261.5" stroke="#000"/><path d="M1256.5 521.5H1261.5" stroke="#000"/><path d="M1256.5 516.5H1265.5" stroke="#000"/><path d="M1256.5 511.5H1261.5" stroke="#000"/><path d="M1256.5 506.5H1261.5" stroke="#000"/><path d="M1256.5 501.5H1261.5" stroke="#000"/><path d="M1256.5 497.5H1261.5" stroke="#000"/><path d="M1256.5 492.5H1265.5" stroke="#000"/><path d="M1256.5 487.5H1261.5" stroke="#000"/><path d="M1256.5 482.5H1261.5" stroke="#000"/><path d="M1256.5 477.5H1261.5" stroke="#000"/><path d="M1256.5 472.5H1261.5" stroke="#000"/><path d="M1256.5 467.5H1265.5" stroke="#000"/><path d="M1256.5 463.5H1261.5" stroke="#000"/><path d="M1256.5 458.5H1261.5" stroke="#000"/><path d="M1256.5 453.5H1261.5" stroke="#000"/><path d="M1256.5 448.5H1261.5" stroke="#000"/><path d="M1256.5 443.5H1265.5" stroke="#000"/><path d="M1256.5 438.5H1261.5" stroke="#000"/><path d="M1256.5 433.5H1261.5" stroke="#000"/><path d="M1256.5 429.5H1261.5" stroke="#000"/><path d="M1256.5 424.5H1261.5" stroke="#000"/><path d="M1256.5 419.5H1265.5" stroke="#000"/><path d="M1256.5 414.5H1261.5" stroke="#000"/><path d="M1256.5 409.5H1261.5" stroke="#000"/><path d="M1256.5 404.5H1261.5" stroke="#000"/><path d="M1256.5 399.5H1261.5" stroke="#000"/><path d="M1256.5 395.5H1265.5" stroke="#000"/><path d="M1256.5 390.5H1261.5" stroke="#000"/><path d="M1256.5 385.5H1261.5" stroke="#000"/><path d="M1256.5 380.5H1261.5" stroke="#000"/><path d="M1256.5 375.5H1261.5" stroke="#000"/><path d="M1256.5 370.5H1265.5" stroke="#000"/><path d="M1256.5 365.5H1261.5" stroke="#000"/><path d="M1256.5 360.5H1261.5" stroke="#000"/><path d="M1256.5 356.5H1261.5" stroke="#000"/><path d="M1256.5 351.5H1261.5" stroke="#000"/><path d="M1256.5 346.5H1265.5" stroke="#000"/><path d="M1256.5 341.5H1261.5" stroke="#000"/><path d="M1256.5 336.5H1261.5" stroke="#000"/><path d="M1256.5 331.5H1261.5" stroke="#000"/><path d="M1256.5 326.5H1261.5" stroke="#000"/><path d="M1256.5 322.5H1265.5" stroke="#000"/><path d="M1256.5 317.5H1261.5" stroke="#000"/><path d="M1256.5 312.5H1261.5" stroke="#000"/><path d="M1256.5 307.5H1261.5" stroke="#000"/><path d="M1256.5 302.5H1261.5" stroke="#000"/><path d="M1256.5 297.5H1265.5" stroke="#000"/><path d="M1256.5 292.5H1261.5" stroke="#000"/><path d="M1256.5 288.5H1261.5" stroke="#000"/><path d="M1256.5 283.5H1261.5" stroke="#000"/><path d="M1256.5 278.5H1261.5" stroke="#000"/><path d="M1256.5 273.5H1265.5" stroke="#000"/><path d="M1256.5 268.5H1261.5" stroke="#000"/><path d="M1256.5 263.5H1261.5" stroke="#000"/><path d="M1256.5 258.5H1261.5" stroke="#000"/><path d="M1256.5 254.5H1261.5" stroke="#000"/><path d="M1256.5 249.5H1265.5" stroke="#000"/><path d="M1256.5 244.5H1261.5" stroke="#000"/><path d="M1256.5 239.5H1261.5" stroke="#000"/><path d="M1256.5 234.5H1261.5" stroke="#000"/><path d="M1256.5 229.5H1261.5" stroke="#000"/><path d="M1256.5 224.5H1265.5" stroke="#000"/><path d="M1256.5 220.5H1261.5" stroke="#000"/><path d="M1256.5 215.5H1261.5" stroke="#000"/><path d="M1256.5 210.5H1261.5" stroke="#000"/><path d="M1256.5 205.5H1261.5" stroke="#000"/><path d="M1256.5 200.5H1265.5" stroke="#000"/><path d="M1256.5 195.5H1261.5" stroke="#000"/><path d="M1256.5 190.5H1261.5" stroke="#000"/><path d="M1256.5 186.5H1261.5" stroke="#000"/><path d="M1256.5 181.5H1261.5" stroke="#000"/><path d="M1256.5 176.5H1265.5" stroke="#000"/><path d="M1256.5 171.5H1261.5" stroke="#000"/><path d="M1256.5 166.5H1261.5" stroke="#000"/><path d="M1256.5 161.5H1261.5" stroke="#000"/><path d="M1256.5 156.5H1261.5" stroke="#000"/><path d="M1256.5 152.5H1265.5" stroke="#000"/><path d="M1256.5 147.5H1261.5" stroke="#000"/><path d="M1256.5 142.5H1261.5" stroke="#000"/></svg>
<div class="t" style="left:1241px;top:608.7px;width:60px;text-align:center;font-size:10px;line-height:10px;transform:rotate(90deg);transform-origin:30px 5px">-400</div>
<div class="t" style="left:1241px;top:560.1px;width:60px;text-align:center;font-size:10px;line-height:10px;transform:rotate(90deg);transform-origin:30px 5px">-200</div>
<div class="t" style="left:1241px;top:511.5px;width:60px;text-align:center;font-size:10px;line-height:10px;transform:rotate(90deg);transform-origin:30px 5px">0</div>
<div class="t" style="left:1241px;top:462.9px;width:60px;text-align:center;font-size:10px;line-height:10px;transform:rotate(90deg);transform-origin:30px 5px">200</div>
<div class="t" style="left:1241px;top:414.3px;width:60px;text-align:center;font-size:10px;line-height:10px;transform:rotate(90deg);transform-origin:30px 5px">400</div>
<div class="t" style="left:1241px;top:365.7px;width:60px;text-align:center;font-size:10px;line-height:10px;transform:rotate(90deg);transform-origin:30px 5px">600</div>
<div class="t" style="left:1241px;top:317.1px;width:60px;text-align:center;font-size:10px;line-height:10px;transform:rotate(90deg);transform-origin:30px 5px">800</div>
<div class="t" style="left:1241px;top:268.5px;width:60px;text-align:center;font-size:10px;line-height:10px;transform:rotate(90deg);transform-origin:30px 5px">1000</div>
<div class="t" style="left:1241px;top:219.9px;width:60px;text-align:center;font-size:10px;line-height:10px;transform:rotate(90deg);transform-origin:30px 5px">1200</div>
<div class="t" style="left:1241px;top:171.3px;width:60px;text-align:center;font-size:10px;line-height:10px;transform:rotate(90deg);transform-origin:30px 5px">1400</div>
<svg style="position:absolute;left:0px;top:0px;pointer-events:none" width="1280" height="700" viewBox="0 0 1280 700"><path d="M296 651.5H1256" stroke="#000"/><path d="M298.5 651.5V660.5" stroke="#000"/><path d="M303.5 651.5V656.5" stroke="#000"/><path d="M308.5 651.5V656.5" stroke="#000"/><path d="M312.5 651.5V656.5" stroke="#000"/><path d="M317.5 651.5V656.5" stroke="#000"/><path d="M322.5 651.5V660.5" stroke="#000"/><path d="M327.5 651.5V656.5" stroke="#000"/><path d="M332.5 651.5V656.5" stroke="#000"/><path d="M337.5 651.5V656.5" stroke="#000"/><path d="M342.5 651.5V656.5" stroke="#000"/><path d="M347.5 651.5V660.5" stroke="#000"/><path d="M351.5 651.5V656.5" stroke="#000"/><path d="M356.5 651.5V656.5" stroke="#000"/><path d="M361.5 651.5V656.5" stroke="#000"/><path d="M366.5 651.5V656.5" stroke="#000"/><path d="M371.5 651.5V660.5" stroke="#000"/><path d="M376.5 651.5V656.5" stroke="#000"/><path d="M381.5 651.5V656.5" stroke="#000"/><path d="M385.5 651.5V656.5" stroke="#000"/><path d="M390.5 651.5V656.5" stroke="#000"/><path d="M395.5 651.5V660.5" stroke="#000"/><path d="M400.5 651.5V656.5" stroke="#000"/><path d="M405.5 651.5V656.5" stroke="#000"/><path d="M410.5 651.5V656.5" stroke="#000"/><path d="M415.5 651.5V656.5" stroke="#000"/><path d="M420.5 651.5V660.5" stroke="#000"/><path d="M424.5 651.5V656.5" stroke="#000"/><path d="M429.5 651.5V656.5" stroke="#000"/><path d="M434.5 651.5V656.5" stroke="#000"/><path d="M439.5 651.5V656.5" stroke="#000"/><path d="M444.5 651.5V660.5" stroke="#000"/><path d="M449.5 651.5V656.5" stroke="#000"/><path d="M454.5 651.5V656.5" stroke="#000"/><path d="M458.5 651.5V656.5" stroke="#000"/><path d="M463.5 651.5V656.5" stroke="#000"/><path d="M468.5 651.5V660.5" stroke="#000"/><path d="M473.5 651.5V656.5" stroke="#000"/><path d="M478.5 651.5V656.5" stroke="#000"/><path d="M483.5 651.5V656.5" stroke="#000"/><path d="M488.5 651.5V656.5" stroke="#000"/><path d="M492.5 651.5V660.5" stroke="#000"/><path d="M497.5 651.5V656.5" stroke="#000"/><path d="M502.5 651.5V656.5" stroke="#000"/><path d="M507.5 651.5V656.5" stroke="#000"/><path d="M512.5 651.5V656.5" stroke="#000"/><path d="M517.5 651.5V660.5" stroke="#000"/><path d="M522.5 651.5V656.5" stroke="#000"/><path d="M527.5 651.5V656.5" stroke="#000"/><path d="M531.5 651.5V656.5" stroke="#000"/><path d="M536.5 651.5V656.5" stroke="#000"/><path d="M541.5 651.5V660.5" stroke="#000"/><path d="M546.5 651.5V656.5" stroke="#000"/><path d="M551.5 651.5V656.5" stroke="#000"/><path d="M556.5 651.5V656.5" stroke="#000"/><path d="M561.5 651.5V656.5" stroke="#000"/><path d="M565.5 651.5V660.5" stroke="#000"/><path d="M570.5 651.5V656.5" stroke="#000"/><path d="M575.5 651.5V656.5" stroke="#000"/><path d="M580.5 651.5V656.5" stroke="#000"/><path d="M585.5 651.5V656.5" stroke="#000"/><path d="M590.5 651.5V660.5" stroke="#000"/><path d="M595.5 651.5V656.5" stroke="#000"/><path d="M599.5 651.5V656.5" stroke="#000"/><path d="M604.5 651.5V656.5" stroke="#000"/><path d="M609.5 651.5V656.5" stroke="#000"/><path d="M614.5 651.5V660.5" stroke="#000"/><path d="M619.5 651.5V656.5" stroke="#000"/><path d="M624.5 651.5V656.5" stroke="#000"/><path d="M629.5 651.5V656.5" stroke="#000"/><path d="M634.5 651.5V656.5" stroke="#000"/><path d="M638.5 651.5V660.5" stroke="#000"/><path d="M643.5 651.5V656.5" stroke="#000"/><path d="M648.5 651.5V656.5" stroke="#000"/><path d="M653.5 651.5V656.5" stroke="#000"/><path d="M658.5 651.5V656.5" stroke="#000"/><path d="M663.5 651.5V660.5" stroke="#000"/><path d="M668.5 651.5V656.5" stroke="#000"/><path d="M672.5 651.5V656.5" stroke="#000"/><path d="M677.5 651.5V656.5" stroke="#000"/><path d="M682.5 651.5V656.5" stroke="#000"/><path d="M687.5 651.5V660.5" stroke="#000"/><path d="M692.5 651.5V656.5" stroke="#000"/><path d="M697.5 651.5V656.5" stroke="#000"/><path d="M702.5 651.5V656.5" stroke="#000"/><path d="M706.5 651.5V656.5" stroke="#000"/><path d="M711.5 651.5V660.5" stroke="#000"/><path d="M716.5 651.5V656.5" stroke="#000"/><path d="M721.5 651.5V656.5" stroke="#000"/><path d="M726.5 651.5V656.5" stroke="#000"/><path d="M731.5 651.5V656.5" stroke="#000"/><path d="M736.5 651.5V660.5" stroke="#000"/><path d="M741.5 651.5V656.5" stroke="#000"/><path d="M745.5 651.5V656.5" stroke="#000"/><path d="M750.5 651.5V656.5" stroke="#000"/><path d="M755.5 651.5V656.5" stroke="#000"/><path d="M760.5 651.5V660.5" stroke="#000"/><path d="M765.5 651.5V656.5" stroke="#000"/><path d="M770.5 651.5V656.5" stroke="#000"/><path d="M775.5 651.5V656.5" stroke="#000"/><path d="M779.5 651.5V656.5" stroke="#000"/><path d="M784.5 651.5V660.5" stroke="#000"/><path d="M789.5 651.5V656.5" stroke="#000"/><path d="M794.5 651.5V656.5" stroke="#000"/><path d="M799.5 651.5V656.5" stroke="#000"/><path d="M804.5 651.5V656.5" stroke="#000"/><path d="M809.5 651.5V660.5" stroke="#000"/><path d="M813.5 651.5V656.5" stroke="#000"/><path d="M818.5 651.5V656.5" stroke="#000"/><path d="M823.5 651.5V656.5" stroke="#000"/><path d="M828.5 651.5V656.5" stroke="#000"/><path d="M833.5 651.5V660.5" stroke="#000"/><path d="M838.5 651.5V656.5" stroke="#000"/><path d="M843.5 651.5V656.5" stroke="#000"/><path d="M848.5 651.5V656.5" stroke="#000"/><path d="M852.5 651.5V656.5" stroke="#000"/><path d="M857.5 651.5V660.5" stroke="#000"/><path d="M862.5 651.5V656.5" stroke="#000"/><path d="M867.5 651.5V656.5" stroke="#000"/><path d="M872.5 651.5V656.5" stroke="#000"/><path d="M877.5 651.5V656.5" stroke="#000"/><path d="M882.5 651.5V660.5" stroke="#000"/><path d="M886.5 651.5V656.5" stroke="#000"/><path d="M891.5 651.5V656.5" stroke="#000"/><path d="M896.5 651.5V656.5" stroke="#000"/><path d="M901.5 651.5V656.5" stroke="#000"/><path d="M906.5 651.5V660.5" stroke="#000"/><path d="M911.5 651.5V656.5" stroke="#000"/><path d="M916.5 651.5V656.5" stroke="#000"/><path d="M920.5 651.5V656.5" stroke="#000"/><path d="M925.5 651.5V656.5" stroke="#000"/><path d="M930.5 651.5V660.5" stroke="#000"/><path d="M935.5 651.5V656.5" stroke="#000"/><path d="M940.5 651.5V656.5" stroke="#000"/><path d="M945.5 651.5V656.5" stroke="#000"/><path d="M950.5 651.5V656.5" stroke="#000"/><path d="M955.5 651.5V660.5" stroke="#000"/><path d="M959.5 651.5V656.5" stroke="#000"/><path d="M964.5 651.5V656.5" stroke="#000"/><path d="M969.5 651.5V656.5" stroke="#000"/><path d="M974.5 651.5V656.5" stroke="#000"/><path d="M979.5 651.5V660.5" stroke="#000"/><path d="M984.5 651.5V656.5" stroke="#000"/><path d="M989.5 651.5V656.5" stroke="#000"/><path d="M993.5 651.5V656.5" stroke="#000"/><path d="M998.5 651.5V656.5" stroke="#000"/><path d="M1003.5 651.5V660.5" stroke="#000"/><path d="M1008.5 651.5V656.5" stroke="#000"/><path d="M1013.5 651.5V656.5" stroke="#000"/><path d="M1018.5 651.5V656.5" stroke="#000"/><path d="M1023.5 651.5V656.5" stroke="#000"/><path d="M1028.5 651.5V660.5" stroke="#000"/><path d="M1032.5 651.5V656.5" stroke="#000"/><path d="M1037.5 651.5V656.5" stroke="#000"/><path d="M1042.5 651.5V656.5" stroke="#000"/><path d="M1047.5 651.5V656.5" stroke="#000"/><path d="M1052.5 651.5V660.5" stroke="#000"/><path d="M1057.5 651.5V656.5" stroke="#000"/><path d="M1062.5 651.5V656.5" stroke="#000"/><path d="M1066.5 651.5V656.5" stroke="#000"/><path d="M1071.5 651.5V656.5" stroke="#000"/><path d="M1076.5 651.5V660.5" stroke="#000"/><path d="M1081.5 651.5V656.5" stroke="#000"/><path d="M1086.5 651.5V656.5" stroke="#000"/><path d="M1091.5 651.5V656.5" stroke="#000"/><path d="M1096.5 651.5V656.5" stroke="#000"/><path d="M1100.5 651.5V660.5" stroke="#000"/><path d="M1105.5 651.5V656.5" stroke="#000"/><path d="M1110.5 651.5V656.5" stroke="#000"/><path d="M1115.5 651.5V656.5" stroke="#000"/><path d="M1120.5 651.5V656.5" stroke="#000"/><path d="M1125.5 651.5V660.5" stroke="#000"/><path d="M1130.5 651.5V656.5" stroke="#000"/><path d="M1135.5 651.5V656.5" stroke="#000"/><path d="M1139.5 651.5V656.5" stroke="#000"/><path d="M1144.5 651.5V656.5" stroke="#000"/><path d="M1149.5 651.5V660.5" stroke="#000"/><path d="M1154.5 651.5V656.5" stroke="#000"/><path d="M1159.5 651.5V656.5" stroke="#000"/><path d="M1164.5 651.5V656.5" stroke="#000"/><path d="M1169.5 651.5V656.5" stroke="#000"/><path d="M1173.5 651.5V660.5" stroke="#000"/><path d="M1178.5 651.5V656.5" stroke="#000"/><path d="M1183.5 651.5V656.5" stroke="#000"/><path d="M1188.5 651.5V656.5" stroke="#000"/><path d="M1193.5 651.5V656.5" stroke="#000"/><path d="M1198.5 651.5V660.5" stroke="#000"/><path d="M1203.5 651.5V656.5" stroke="#000"/><path d="M1207.5 651.5V656.5" stroke="#000"/><path d="M1212.5 651.5V656.5" stroke="#000"/><path d="M1217.5 651.5V656.5" stroke="#000"/><path d="M1222.5 651.5V660.5" stroke="#000"/><path d="M1227.5 651.5V656.5" stroke="#000"/><path d="M1232.5 651.5V656.5" stroke="#000"/><path d="M1237.5 651.5V656.5" stroke="#000"/><path d="M1242.5 651.5V656.5" stroke="#000"/><path d="M1246.5 651.5V660.5" stroke="#000"/><path d="M1251.5 651.5V656.5" stroke="#000"/></svg>
<div class="t" style="left:268.4px;top:663px;width:60px;text-align:center;font-size:10px;line-height:10px">-1200</div>
<div class="t" style="left:317.0px;top:663px;width:60px;text-align:center;font-size:10px;line-height:10px">-1000</div>
<div class="t" style="left:365.7px;top:663px;width:60px;text-align:center;font-size:10px;line-height:10px">-800</div>
<div class="t" style="left:414.3px;top:663px;width:60px;text-align:center;font-size:10px;line-height:10px">-600</div>
<div class="t" style="left:463.0px;top:663px;width:60px;text-align:center;font-size:10px;line-height:10px">-400</div>
<div class="t" style="left:511.6px;top:663px;width:60px;text-align:center;font-size:10px;line-height:10px">-200</div>
<div class="t" style="left:560.2px;top:663px;width:60px;text-align:center;font-size:10px;line-height:10px">0</div>
<div class="t" style="left:608.9px;top:663px;width:60px;text-align:center;font-size:10px;line-height:10px">200</div>
<div class="t" style="left:657.5px;top:663px;width:60px;text-align:center;font-size:10px;line-height:10px">400</div>
<div class="t" style="left:706.2px;top:663px;width:60px;text-align:center;font-size:10px;line-height:10px">600</div>
<div class="t" style="left:754.8px;top:663px;width:60px;text-align:center;font-size:10px;line-height:10px">800</div>
<div class="t" style="left:803.4px;top:663px;width:60px;text-align:center;font-size:10px;line-height:10px">1000</div>
<div class="t" style="left:852.1px;top:663px;width:60px;text-align:center;font-size:10px;line-height:10px">1200</div>
<div class="t" style="left:900.7px;top:663px;width:60px;text-align:center;font-size:10px;line-height:10px">1400</div>
<div class="t" style="left:949.4px;top:663px;width:60px;text-align:center;font-size:10px;line-height:10px">1600</div>
<div class="t" style="left:998.0px;top:663px;width:60px;text-align:center;font-size:10px;line-height:10px">1800</div>
<div class="t" style="left:1046.6px;top:663px;width:60px;text-align:center;font-size:10px;line-height:10px">2000</div>
<div class="t" style="left:1095.3px;top:663px;width:60px;text-align:center;font-size:10px;line-height:10px">2200</div>
<div class="t" style="left:1143.9px;top:663px;width:60px;text-align:center;font-size:10px;line-height:10px">2400</div>
<div class="t" style="left:1192.6px;top:663px;width:60px;text-align:center;font-size:10px;line-height:10px">2600</div>
<div style="left:273px;top:651px;width:23px;height:24px;background:#fff"></div>
<div style="left:273px;top:675px;width:1007px;height:20px;background:#f0f0f0"></div>
<svg style="position:absolute;left:276px;top:677px;" width="15" height="15" viewBox="0 0 15 15"><path d="M2 1v12h12" fill="none" stroke="#000" stroke-width="1.2"/><path d="M0 3l2-2 2 2M12 11l2 2-2 2" fill="none" stroke="#000"/><path d="M4 6l3 3 3-3 3 3" fill="none" stroke="#a02040"/></svg>
<div style="left:293px;top:675px;width:40px;height:19px;background:#fff;box-sizing:border-box;border-top:1px solid #8a8a8a;border-left:1px solid #8a8a8a"></div>
<div class="t " style="left:296px;top:679.69px;font-size:11px;line-height:11px;">Система координат</div>
<div style="left:273px;top:695px;width:1007px;height:6px;background:#f0f0f0"></div>
<div style="left:273px;top:701px;width:1007px;height:20px;background:#fff"></div>
<div style="left:273px;top:721px;width:1007px;height:1px;background:#000"></div>
<div style="left:278px;top:701px;width:60px;height:21px;background:#ebebeb;box-sizing:border-box;border:1px solid #000;border-bottom:none;border-right:none"></div>
<svg style="position:absolute;left:285px;top:706px;" width="12" height="12" viewBox="0 0 12 12"><circle cx="3.5" cy="5" r="3.2" fill="#1a2fd0"/><circle cx="8.5" cy="7.5" r="2.6" fill="#e02020"/><path d="M8.5 0.5l3 4h-6z" fill="#f0c020"/></svg>
<div class="t " style="left:304px;top:706.69px;font-size:11px;line-height:11px;">Атрибуты</div>
<div style="left:273px;top:724px;width:1005px;height:258px;background:#fff;box-sizing:border-box;border:1px solid #a0a0a0;"></div>
<div class="t " style="left:738px;top:857.69px;font-size:11px;line-height:11px;letter-spacing:0.189px;color:#606060">&lt;Нет данных&gt;</div>
<div style="left:268px;top:724px;width:5px;height:258px;background:#f0f0f0"></div>
<div style="left:940px;top:325px;width:334px;height:351px;background:#f0f0f0;box-sizing:border-box;border:1px solid #3b8fc4"></div>
<div style="left:1258px;top:330px;width:11px;height:11px;background:#c75050;box-sizing:border-box;"></div>
<svg style="position:absolute;left:1258px;top:330px;" width="11" height="11" viewBox="0 0 11 11"><path d="M3.5 3.5l4 4M7.5 3.5l-4 4" stroke="#fff" stroke-width="1.4"/></svg>
<div style="left:941px;top:345px;width:332px;height:1px;background:#000"></div>
<div class="t " style="left:962.3px;top:351.69px;font-size:11px;line-height:11px;letter-spacing:0.297px;">нт, тип и код расчета:</div>
<svg style="position:absolute;left:1177px;top:351px;" width="11" height="11" viewBox="0 0 11 11"><path d="M1.5 9.5l1-3 6-6 2 2-6 6z" fill="#f0c030" stroke="#403010"/></svg>
<div class="t " style="left:1190.6px;top:351.69px;font-size:11px;line-height:11px;letter-spacing:0.189px;">Настройка...</div>
<div style="left:940px;top:368px;width:326px;height:228px;background:#fff;box-sizing:border-box;border:1px solid #828282;"></div>
<svg style="position:absolute;left:957px;top:372px;" width="12" height="14" viewBox="0 0 12 14"><path d="M2 1c4 2 5 8 1 12" fill="none" stroke="#5a9ad8" stroke-width="2"/></svg>
<div class="t " style="left:971px;top:372.69px;font-size:11px;line-height:11px;">Котельная Рогачевского РТС, ф-л &quot;Жлобинские ЭС&quot; Р</div>
<div style="left:1248px;top:369px;width:17px;height:209px;background:#f0f0f0"></div>
<svg style="position:absolute;left:1250px;top:372px;" width="12" height="8" viewBox="0 0 12 8"><path d="M2 6l4-4 4 4" fill="none" stroke="#a8a8a8" stroke-width="1.2"/></svg>
<svg style="position:absolute;left:1250px;top:565px;" width="12" height="8" viewBox="0 0 12 8"><path d="M2 2l4 4 4-4" fill="none" stroke="#a8a8a8" stroke-width="1.2"/></svg>
<div style="left:941px;top:401px;width:24px;height:0px;"></div>
<svg style="position:absolute;left:957px;top:392px;" width="6" height="8" viewBox="0 0 6 8"><path d="M0.5 0.5h5v7h-5z" fill="none" stroke="#888"/></svg>
<svg style="position:absolute;left:973px;top:389px;" width="12" height="12" viewBox="0 0 12 12"><path d="M0.5 1.5h4l1 1h4v9h-9z" fill="#4a7ad8" stroke="#1f48a8"/><path d="M2.5 5.5h9v6h-9z" fill="#b8d0f8" stroke="#1f48a8"/></svg>
<div class="t " style="left:988.7px;top:390.69px;font-size:11px;line-height:11px;letter-spacing:-0.034px;">Концентрации по веществам</div>
<div style="left:941px;top:578px;width:324px;height:17px;background:#f0f0f0"></div>
<div style="left:941px;top:578px;width:102px;height:17px;background:#c8c8c8"></div>
<svg style="position:absolute;left:1234px;top:582px;" width="8" height="9" viewBox="0 0 8 9"><path d="M2 1l4 3.5L2 8" fill="none" stroke="#404040" stroke-width="1.4"/></svg>
<div style="left:941px;top:605px;width:326px;height:63px;background:transparent;box-sizing:border-box;border:1px solid #dcdcdc;"></div>
<div style="left:941px;top:600px;width:70px;height:10px;background:#f0f0f0"></div>
<div class="t " style="left:958px;top:601.69px;font-size:11px;line-height:11px;">линии и флажки</div>
<div class="t " style="left:962px;top:622.69px;font-size:11px;line-height:11px;letter-spacing:0.094px;">метр:</div>
<div style="left:998px;top:618px;width:259px;height:21px;background:#dedede;box-sizing:border-box;border:1px solid #c0c0c0;"></div>
<svg style="position:absolute;left:1240px;top:624px;" width="12" height="8" viewBox="0 0 12 8"><path d="M1.5 2l4.5 4.5 4.5-4.5" fill="none" stroke="#404040" stroke-width="1.1"/></svg>
<div class="t " style="left:962.3px;top:646.69px;font-size:11px;line-height:11px;letter-spacing:0.206px;">та, м:</div>
<div style="left:997px;top:642px;width:94px;height:21px;background:#fff;box-sizing:border-box;border:1px solid #7a7a7a;"></div>
<svg style="position:absolute;left:1075px;top:648px;" width="12" height="8" viewBox="0 0 12 8"><path d="M1.5 2l4.5 4.5 4.5-4.5" fill="none" stroke="#404040" stroke-width="1.1"/></svg>
<div style="left:940px;top:674px;width:334px;height:1px;background:#3b8fc4"></div>
<div style="left:1019px;top:678px;width:1px;height:16px;background:#c8c8c8"></div>
<svg style="position:absolute;left:1024px;top:677px;" width="15" height="14" viewBox="0 0 15 14"><path d="M2 13c0-6 4-10 11-11" fill="none" stroke="#5a5acb" stroke-width="1.3"/><path d="M5 13c0-4 3-7 8-8" fill="none" stroke="#3aa050" stroke-width="1.3"/><path d="M8 13c0-3 2-4 5-5" fill="none" stroke="#d03030" stroke-width="1.3"/></svg>
<div style="left:1041px;top:675px;width:234px;height:20px;background:#fff;box-sizing:border-box;border:1px solid #b0b0b0;"></div>
<div class="t " style="left:1043px;top:679.69px;font-size:11px;line-height:11px;letter-spacing:0.087px;">Расчет: код расчета не выбран</div>
<div style="left:1257px;top:675px;width:18px;height:20px;background:#cce4f7;box-sizing:border-box;border:1px solid #3c8dd8;"></div>
<svg style="position:absolute;left:1260px;top:682px;" width="12" height="8" viewBox="0 0 12 8"><path d="M1.5 2l4.5 4.5 4.5-4.5" fill="none" stroke="#404040" stroke-width="1.1"/></svg>
<div style="left:318px;top:199px;width:644px;height:578px;background:#f0f0f0;box-sizing:border-box;border:1px solid #46889a;box-shadow:3px 6px 14px rgba(0,0,0,0.28), 0 0 4px rgba(0,0,0,0.08), 0 1px 0 #a8dcec"></div>
<div style="left:318px;top:199px;width:644px;height:31px;background:#0099bc"></div>
<div style="left:319px;top:230px;width:1px;height:545px;background:#dfffff"></div>
<div style="left:960px;top:230px;width:1px;height:545px;background:#dfffff"></div>
<div style="left:319px;top:775px;width:642px;height:1px;background:#dfffff"></div>
<svg style="position:absolute;left:328px;top:207px;" width="15" height="14" viewBox="0 0 15 14"><path d="M1 12c0-6 4-10 11-11" fill="none" stroke="#3050c8" stroke-width="1.6"/><path d="M4 13c0-4 3-7 8-8" fill="none" stroke="#40b050" stroke-width="1.6"/><path d="M7 13c0-3 2-4 5-5" fill="none" stroke="#d03030" stroke-width="1.6"/></svg>
<div class="t " style="left:347.5px;top:208.84px;font-size:12px;line-height:12px;letter-spacing:0.037px;color:#fff">Управление расчетными данными</div>
<svg style="position:absolute;left:941px;top:209px;" width="10" height="10" viewBox="0 0 10 10"><path d="M0.5 0.5L9.5 9.5M9.5 0.5L0.5 9.5" stroke="#fff" stroke-width="1.1"/></svg>
<div style="left:321px;top:236px;width:3px;height:15px;background:repeating-linear-gradient(#707070 0 1px,transparent 1px 2px)"></div>
<div style="left:320px;top:236px;width:1px;height:15px;background:repeating-linear-gradient(#ffffff 0 1px,transparent 1px 2px)"></div>
<svg style="position:absolute;left:329px;top:236px;" width="16" height="15" viewBox="0 0 16 15"><path d="M5.5 0.5h6l3 3v11h-9z" fill="#fff" stroke="#a8a8a8"/><path d="M1 9h9M5.5 4.5v9" stroke="#5ab030" stroke-width="3.2"/><path d="M1 9h9M5.5 4.5v9" stroke="#c8f0b0" stroke-width="1.2"/></svg>
<svg style="position:absolute;left:352px;top:235px;" width="18" height="17" viewBox="0 0 18 17"><path d="M2 2l14 13M16 2L2 15" stroke="#d43a3a" stroke-width="2"/></svg>
<div style="left:375px;top:232px;width:1px;height:21px;background:#a0a0a0"></div>
<svg style="position:absolute;left:383px;top:237px;" width="12" height="12" viewBox="0 0 12 12"><path d="M5 0.5L0.5 4.5 5 8.5V6.2c2.5 0 4 0.6 4 2.8 0 1-0.5 2-1.2 2.5 3-0.8 3.7-3 3.7-4.5 0-3-2.5-4.5-6.5-4.5z" fill="#707070"/></svg>
<svg style="position:absolute;left:406px;top:237px;" width="12" height="12" viewBox="0 0 12 12"><path d="M7 0.5l4.5 4L7 8.5V6.2c-2.5 0-4 0.6-4 2.8 0 1 0.5 2 1.2 2.5-3-0.8-3.7-3-3.7-4.5 0-3 2.5-4.5 6.5-4.5z" fill="#707070"/></svg>
<div class="t " style="left:324.2px;top:269.69px;font-size:11px;line-height:11px;letter-spacing:-0.030px;">Вариант расчета:</div>
<div style="left:422px;top:264px;width:424px;height:21px;background:#e5e5e5;box-sizing:border-box;border:1px solid #adadad;"></div>
<div class="t " style="left:424px;top:269.69px;font-size:11px;line-height:11px;letter-spacing:-0.062px;">Котельная Рогачевского РТС, ф-л &quot;Жлобинские ЭС&quot; РУП &quot;Гомельэнерго&quot; (1) - Р</div>
<svg style="position:absolute;left:830px;top:271px;" width="12" height="8" viewBox="0 0 12 8"><path d="M1.5 2l4.5 4.5 4.5-4.5" fill="none" stroke="#404040" stroke-width="1.1"/></svg>
<div style="left:850px;top:265px;width:19px;height:19px;background:#dae8f6;box-sizing:border-box;border:1px solid #c2d8ee;"></div>
<svg style="position:absolute;left:853px;top:268px;" width="13" height="13" viewBox="0 0 13 13"><path d="M2 10.5l1-3 6-6 2 2-6 6z" fill="#f0d030" stroke="#302010" stroke-width="1"/></svg>
<div class="t " style="left:324.6px;top:290.69px;font-size:11px;line-height:11px;letter-spacing:0.002px;">Тип расчета:</div>
<div style="left:398px;top:286px;width:448px;height:21px;background:#e5e5e5;box-sizing:border-box;border:1px solid #adadad;"></div>
<div class="t " style="left:400px;top:290.69px;font-size:11px;line-height:11px;letter-spacing:-0.042px;">Концентрации по веществам</div>
<svg style="position:absolute;left:830px;top:293px;" width="12" height="8" viewBox="0 0 12 8"><path d="M1.5 2l4.5 4.5 4.5-4.5" fill="none" stroke="#404040" stroke-width="1.1"/></svg>
<div style="left:321px;top:333px;width:638px;height:345px;background:#f0f0f0;box-sizing:border-box;border-top:1px solid #fff;border-bottom:2px solid #696969;border-right:1px solid #a0a0a0"></div>
<div style="left:534px;top:316px;width:168px;height:18px;background:#f0f0f0;box-sizing:border-box;border-top:1px solid #fff;border-right:2px solid #696969;border-left:1px solid #fff"></div>
<div class="t " style="left:537.6px;top:318.19px;font-size:11px;line-height:11px;letter-spacing:0.083px;">Представление кодов расчета</div>
<div style="left:321px;top:313px;width:213px;height:21px;background:#f0f0f0;box-sizing:border-box;border-top:1px solid #fff;border-left:1px solid #fff;border-right:2px solid #696969"></div>
<div class="t " style="left:325.6px;top:317.19px;font-size:11px;line-height:11px;letter-spacing:0.006px;">Представление расчетных параметров</div>
<div style="left:323px;top:336px;width:291px;height:339px;background:#fff;box-sizing:border-box;border:1px solid #a0a0a0;"></div>
<div style="left:325px;top:338px;width:287px;height:335px;box-sizing:border-box;border:1px solid #696969;background:#fff"></div>
<div style="left:327px;top:340px;width:282px;height:13px;background:#0078d7"></div>
<div class="t " style="left:327.8px;top:341.19px;font-size:11px;line-height:11px;letter-spacing:0.099px;color:#fff">Концентрация вредного вещества (в долях ПДК)</div>
<div style="left:614px;top:458px;width:4px;height:88px;background:radial-gradient(circle,#9a9a9a 0.8px,transparent 1px) 0 0/3px 3px"></div>
<div style="left:622px;top:337px;width:334px;height:339px;box-sizing:border-box;border:1px solid #a0a0a0;box-shadow:inset -1px -1px 0 #fff"></div>
<div style="left:624px;top:339px;width:331px;height:20px;background:#c0c0c0;box-sizing:border-box;border:1px solid #8c8c8c;"></div>
<div class="t " style="left:627.4px;top:343.69px;font-size:11px;line-height:11px;letter-spacing:-0.188px;">Описание параметра</div>
<div class="t " style="left:628.2px;top:370.69px;font-size:11px;line-height:11px;letter-spacing:-0.195px;">Название</div>
<div style="left:683px;top:366px;width:112px;height:21px;background:#fff;box-sizing:border-box;border:1px solid #7a7a7a;"></div>
<div class="t " style="left:685px;top:370.69px;font-size:11px;line-height:11px;letter-spacing:0.032px;">Концентрация вредн</div>
<div class="t " style="left:629.3px;top:393.69px;font-size:11px;line-height:11px;letter-spacing:0.078px;">Короткое название</div>
<div class="t " style="left:630.2px;top:416.69px;font-size:11px;line-height:11px;letter-spacing:-0.263px;">Единица измерения</div>
<div style="left:734px;top:412px;width:105px;height:21px;background:#fff;box-sizing:border-box;border:1px solid #7a7a7a;"></div>
<div class="t " style="left:736px;top:416.69px;font-size:11px;line-height:11px;letter-spacing:-0.122px;">ПДК</div>
<div style="left:629px;top:439px;width:13px;height:13px;background:#fff;box-sizing:border-box;border:1px solid #333;"></div>
<div class="t " style="left:643.8px;top:440.69px;font-size:11px;line-height:11px;letter-spacing:-0.215px;">Минимальное значение</div>
<div style="left:767px;top:436px;width:72px;height:20px;background:#fafafa;box-sizing:border-box;border:1px solid #dadada;"></div>
<div style="left:629px;top:463px;width:13px;height:13px;background:#fff;box-sizing:border-box;border:1px solid #333;"></div>
<div class="t " style="left:643.8px;top:463.69px;font-size:11px;line-height:11px;letter-spacing:-0.161px;">Максимальное значение</div>
<div style="left:772px;top:459px;width:67px;height:20px;background:#fafafa;box-sizing:border-box;border:1px solid #dadada;"></div>
<div class="t " style="left:629.3px;top:485.69px;font-size:11px;line-height:11px;letter-spacing:0.070px;">Точность</div>
<div style="left:682px;top:481px;width:62px;height:21px;background:#fff;box-sizing:border-box;border:1px solid #7a7a7a;"></div>
<div class="t " style="left:685px;top:485.69px;font-size:11px;line-height:11px;">2</div>
<div style="left:727px;top:483px;width:15px;height:9px;background:#f0f0f0;box-sizing:border-box;border:1px solid #cfcfcf;"></div>
<div style="left:727px;top:492px;width:15px;height:9px;background:#f0f0f0;box-sizing:border-box;border:1px solid #cfcfcf;"></div>
<svg style="position:absolute;left:727px;top:483px;" width="15" height="18" viewBox="0 0 15 18"><path d="M4 6l3.5-3.5L11 6z" fill="#000"/><path d="M4 12l3.5 3.5L11 12z" fill="#000"/></svg>
<div style="left:629px;top:508px;width:13px;height:13px;background:#fff;box-sizing:border-box;border:1px solid #333;"></div>
<svg style="position:absolute;left:629px;top:508px;" width="13" height="13" viewBox="0 0 13 13"><path d="M2.5 6.5l3 3 5-6.5" fill="none" stroke="#222" stroke-width="1.3"/></svg>
<div class="t " style="left:644.3px;top:509.69px;font-size:11px;line-height:11px;letter-spacing:-0.035px;">Строить изолинии</div>
<div class="t " style="left:629.3px;top:531.69px;font-size:11px;line-height:11px;letter-spacing:-0.194px;">Схема изолиний:</div>
<svg style="position:absolute;left:794px;top:530px;" width="12" height="12" viewBox="0 0 12 12"><path d="M1 6h10M6 1v10" stroke="#2a9a2a" stroke-width="2.2"/></svg>
<svg style="position:absolute;left:813px;top:530px;" width="16" height="12" viewBox="0 0 16 12"><path d="M4 1c-2 0-2 2-2 5s0 5 2 5" fill="none" stroke="#2a9a2a" stroke-width="1.6"/><path d="M6 6h9M10.5 1.5v9" stroke="#2a9a2a" stroke-width="2.2"/></svg>
<svg style="position:absolute;left:834px;top:530px;" width="12" height="12" viewBox="0 0 12 12"><path d="M1 6h10" stroke="#d03030" stroke-width="2.2"/></svg>
<svg style="position:absolute;left:853px;top:529px;" width="13" height="13" viewBox="0 0 13 13"><path d="M1 1l11 11M12 1L1 12" stroke="#d03030" stroke-width="1.8"/></svg>
<svg style="position:absolute;left:873px;top:529px;" width="14" height="14" viewBox="0 0 14 14"><path d="M1 13l2-4 8-8 2 2-8 8z" fill="#d86a6a" stroke="#a04040" stroke-width="0.8"/><path d="M1 13l2-4 2 2z" fill="#ddd"/></svg>
<svg style="position:absolute;left:893px;top:529px;" width="13" height="13" viewBox="0 0 13 13"><rect x="0.5" y="0.5" width="12" height="12" fill="#d0d0d0" stroke="#9a9a9a"/><rect x="3" y="1" width="7" height="4" fill="#fff"/><rect x="3" y="7" width="7" height="5" fill="#eee"/></svg>
<svg style="position:absolute;left:913px;top:528px;" width="15" height="14" viewBox="0 0 15 14"><path d="M0.5 4.5h5l1 1h7v8h-13z" fill="#f4c040" stroke="#c08a10"/><path d="M7 8c1-3 3-4 5-4" fill="none" stroke="#2a9a2a" stroke-width="2"/><path d="M11 1l3 3-3 3z" fill="#2a9a2a"/></svg>
<div style="left:628px;top:548px;width:302px;height:101px;background:#fff;box-sizing:border-box;border:1px solid #a0a0a0;"></div>
<div style="left:629px;top:549px;width:283px;height:31px;background:#f0f0f0"></div>
<div style="left:726px;top:549px;width:1px;height:100px;background:#c8c8c8"></div>
<div style="left:825px;top:549px;width:1px;height:100px;background:#c8c8c8"></div>
<div style="left:727px;top:549px;width:1px;height:31px;background:#fff"></div>
<div style="left:826px;top:549px;width:1px;height:31px;background:#fff"></div>
<div style="left:629px;top:579px;width:283px;height:1px;background:#a0a0a0"></div>
<div class="t " style="left:644.6px;top:553.19px;font-size:11px;line-height:11px;letter-spacing:-0.223px;">Значение</div>
<div class="t " style="left:641px;top:566.19px;font-size:11px;line-height:11px;letter-spacing:-0.112px;">параметра</div>
<svg style="position:absolute;left:708px;top:563px;" width="8" height="6" viewBox="0 0 8 6"><path d="M0.5 5.5L4 0.5 7.5 5.5z" fill="#fff" stroke="#aaa" stroke-width="0.8"/></svg>
<div class="t " style="left:745.5px;top:559.39px;font-size:11px;line-height:11px;letter-spacing:0.096px;">Цвет линии</div>
<div class="t " style="left:833.3px;top:559.39px;font-size:11px;line-height:11px;letter-spacing:0.097px;">Цвет заливки</div>
<div style="left:727px;top:580px;width:185px;height:18px;background:#f0f0f0"></div>
<div style="left:629px;top:598px;width:283px;height:1px;background:#c8c8c8"></div>
<div class="t" style="left:640px;top:584.2px;width:83px;text-align:right;font-size:11px;line-height:11px">0</div>
<div style="left:729px;top:583px;width:28px;height:13px;background:#e1e0d7;box-sizing:border-box;border:1px solid #a8a8a8;"></div>
<div class="t " style="left:760px;top:584.19px;font-size:11px;line-height:11px;letter-spacing:-0.016px;">225.224.215</div>
<div style="left:829px;top:583px;width:28px;height:13px;background:#fffff5;box-sizing:border-box;border:1px solid #a8a8a8;"></div>
<div class="t " style="left:859px;top:584.19px;font-size:11px;line-height:11px;letter-spacing:0.029px;">255.255.2</div>
<div style="left:629px;top:616px;width:283px;height:1px;background:#c8c8c8"></div>
<div class="t" style="left:640px;top:602.2px;width:83px;text-align:right;font-size:11px;line-height:11px">0,05</div>
<div style="left:729px;top:601px;width:28px;height:13px;background:#cce1e1;box-sizing:border-box;border:1px solid #a8a8a8;"></div>
<div class="t " style="left:760px;top:602.19px;font-size:11px;line-height:11px;letter-spacing:-0.016px;">204.225.225</div>
<div style="left:829px;top:601px;width:28px;height:13px;background:#eaffff;box-sizing:border-box;border:1px solid #a8a8a8;"></div>
<div class="t " style="left:859px;top:602.19px;font-size:11px;line-height:11px;letter-spacing:0.029px;">234.255.2</div>
<div style="left:629px;top:634px;width:283px;height:1px;background:#c8c8c8"></div>
<div class="t" style="left:640px;top:620.2px;width:83px;text-align:right;font-size:11px;line-height:11px">0,1</div>
<div style="left:729px;top:619px;width:28px;height:13px;background:#b7e1c1;box-sizing:border-box;border:1px solid #a8a8a8;"></div>
<div class="t " style="left:760px;top:620.19px;font-size:11px;line-height:11px;letter-spacing:-0.016px;">183.225.193</div>
<div style="left:829px;top:619px;width:28px;height:13px;background:#d5ffdf;box-sizing:border-box;border:1px solid #a8a8a8;"></div>
<div class="t " style="left:859px;top:620.19px;font-size:11px;line-height:11px;letter-spacing:0.029px;">213.255.2</div>
<div style="left:629px;top:652px;width:283px;height:1px;background:#c8c8c8"></div>
<div class="t" style="left:640px;top:638.2px;width:83px;text-align:right;font-size:11px;line-height:11px">0,15</div>
<div style="left:729px;top:637px;width:28px;height:13px;background:#afe1bb;box-sizing:border-box;border:1px solid #a8a8a8;"></div>
<div class="t " style="left:760px;top:638.19px;font-size:11px;line-height:11px;letter-spacing:-0.016px;">175.225.187</div>
<div style="left:829px;top:637px;width:28px;height:13px;background:#cdffd9;box-sizing:border-box;border:1px solid #a8a8a8;"></div>
<div class="t " style="left:859px;top:638.19px;font-size:11px;line-height:11px;letter-spacing:0.029px;">205.255.2</div>
<div style="left:629px;top:648px;width:283px;height:1px;background:#a0a0a0"></div>
<div style="left:629px;top:649px;width:300px;height:25px;background:#f0f0f0"></div>
<div style="left:912px;top:549px;width:17px;height:100px;background:repeating-conic-gradient(#f4f4f4 0 25%, #e8e8e8 0 50%) 0 0/2px 2px"></div>
<div style="left:912px;top:549px;width:1px;height:100px;background:#a0a0a0"></div>
<div style="left:912px;top:549px;width:18px;height:17px;background:#f0f0f0;box-sizing:border-box;border:1px solid #a8a8a8;"></div>
<svg style="position:absolute;left:912px;top:549px;" width="17" height="18" viewBox="0 0 17 18"><path d="M4.5 11l4-4 4 4z" fill="#000"/></svg>
<div style="left:912px;top:565px;width:18px;height:8px;background:#f0f0f0;box-sizing:border-box;border:1px solid #a8a8a8;"></div>
<div style="left:912px;top:632px;width:18px;height:17px;background:#f0f0f0;box-sizing:border-box;border:1px solid #a8a8a8;"></div>
<svg style="position:absolute;left:912px;top:631px;" width="17" height="18" viewBox="0 0 17 18"><path d="M4.5 7l4 4 4-4z" fill="#000"/></svg>
<div style="left:320px;top:685px;width:9px;height:1px;background:#dcdcdc"></div>
<div style="left:450px;top:685px;width:508px;height:1px;background:#dcdcdc"></div>
<div class="t " style="left:328.8px;top:680.69px;font-size:11px;line-height:11px;letter-spacing:-0.022px;">Отображение областей</div>
<div class="t " style="left:330.3px;top:709.39px;font-size:11px;line-height:11px;letter-spacing:0.026px;">Сглаживание границ:</div>
<div style="left:459px;top:701px;width:279px;height:9px;background:#e7eaea;box-sizing:border-box;border:1px solid #d6d6d6;"></div>
<div style="left:665px;top:703px;width:68px;height:6px;background:#e81010"></div>
<svg style="position:absolute;left:672px;top:697px;" width="12" height="17" viewBox="0 0 12 17"><path d="M0.5 0.5h11v11L6 16.5 0.5 11.5z" fill="#0078d7" stroke="#0a5aa8"/></svg>
<svg style="position:absolute;left:0px;top:0px;pointer-events:none" width="1280" height="1024" viewBox="0 0 1280 1024"><path d="M464.5 717V720" stroke="#000"/><path d="M478.5 717V720" stroke="#000"/><path d="M491.5 717V720" stroke="#000"/><path d="M505.5 717V720" stroke="#000"/><path d="M518.5 717V720" stroke="#000"/><path d="M531.5 717V720" stroke="#000"/><path d="M545.5 717V720" stroke="#000"/><path d="M558.5 717V720" stroke="#000"/><path d="M572.5 717V720" stroke="#000"/><path d="M585.5 717V720" stroke="#000"/><path d="M598.5 717V720" stroke="#000"/><path d="M612.5 717V720" stroke="#000"/><path d="M625.5 717V720" stroke="#000"/><path d="M639.5 717V720" stroke="#000"/><path d="M652.5 717V720" stroke="#000"/><path d="M665.5 717V720" stroke="#000"/><path d="M679.5 717V720" stroke="#000"/><path d="M692.5 717V720" stroke="#000"/><path d="M706.5 717V720" stroke="#000"/><path d="M719.5 717V720" stroke="#000"/><path d="M732.5 717V720" stroke="#000"/></svg>
<div class="t " style="left:457px;top:726.69px;font-size:11px;line-height:11px;letter-spacing:-0.201px;">Быстро</div>
<div class="t " style="left:562.2px;top:726.69px;font-size:11px;line-height:11px;letter-spacing:-0.038px;">Значение - 80</div>
<div class="t " style="left:700px;top:726.69px;font-size:11px;line-height:11px;letter-spacing:0.057px;">Гладко</div>
<div style="left:780px;top:697px;width:13px;height:13px;background:#fff;box-sizing:border-box;border:1px solid #333;"></div>
<svg style="position:absolute;left:780px;top:697px;" width="13" height="13" viewBox="0 0 13 13"><path d="M2.5 6.5l3 3 5-6.5" fill="none" stroke="#222" stroke-width="1.3"/></svg>
<div class="t " style="left:794.6px;top:699.19px;font-size:11px;line-height:11px;letter-spacing:0.057px;">Использовать заливку</div>
<div class="t " style="left:783.3px;top:721.69px;font-size:11px;line-height:11px;letter-spacing:0.034px;color:#1a1a30">Прозрачность слоя, %</div>
<div style="left:904px;top:717px;width:47px;height:21px;background:#fff;box-sizing:border-box;border:1px solid #7a7a7a;"></div>
<div class="t " style="left:907px;top:721.69px;font-size:11px;line-height:11px;">30</div>
<div style="left:934px;top:719px;width:15px;height:9px;background:#f0f0f0;box-sizing:border-box;border:1px solid #cfcfcf;"></div>
<div style="left:934px;top:728px;width:15px;height:9px;background:#f0f0f0;box-sizing:border-box;border:1px solid #cfcfcf;"></div>
<svg style="position:absolute;left:934px;top:719px;" width="15" height="18" viewBox="0 0 15 18"><path d="M4 6l3.5-3.5L11 6z" fill="#000"/><path d="M4 12l3.5 3.5L11 12z" fill="#000"/></svg>
<div style="left:320px;top:745px;width:640px;height:1px;background:#dcdcdc"></div>
<div style="left:320px;top:746px;width:640px;height:1px;background:#f8f8f8"></div>
<div style="left:643px;top:752px;width:98px;height:23px;box-sizing:border-box;border:2px solid #0078d7;background:#e1e1e1"></div>
<div style="left:646px;top:755px;width:92px;height:17px;box-sizing:border-box;border:1px dotted #000"></div>
<svg style="position:absolute;left:675px;top:755px;" width="17" height="15" viewBox="0 0 17 15"><path d="M2 7l4.5 5L15 2" fill="none" stroke="#3a9a30" stroke-width="3.4"/><path d="M2 7l4.5 5L15 2" fill="none" stroke="#a8f090" stroke-width="1.5"/></svg>
<div class="t " style="left:694.3px;top:758.69px;font-size:11px;line-height:11px;letter-spacing:-0.731px;">Ok</div>
<div style="left:751px;top:752px;width:98px;height:23px;background:#cccccc;box-sizing:border-box;border:1px solid #bfbfbf;"></div>
<svg style="position:absolute;left:762px;top:754px;" width="17" height="18" viewBox="0 0 17 18"><path d="M3 8c0-4 4-6 8-4l2-2v6h-6l2-2c-3-1-5 0-5 2zM14 10c0 4-4 6-8 4l-2 2v-6h6l-2 2c3 1 5 0 5-2z" fill="#e8e8e8" stroke="#b0b0b0"/></svg>
<div class="t " style="left:781.4px;top:758.69px;font-size:11px;line-height:11px;letter-spacing:-0.316px;color:#a0a0a0">Применить</div>
<div style="left:859px;top:752px;width:98px;height:23px;background:#e1e1e1;box-sizing:border-box;border:1px solid #adadad;"></div>
<svg style="position:absolute;left:880px;top:756px;" width="15" height="15" viewBox="0 0 15 15"><path d="M2 2l11 11M13 2L2 13" stroke="#e0502a" stroke-width="3.2"/><path d="M2 2l11 11M13 2L2 13" stroke="#ff8a5a" stroke-width="1"/></svg>
<div class="t " style="left:898px;top:758.69px;font-size:11px;line-height:11px;letter-spacing:-0.311px;">Отмена</div>
<div style="left:857px;top:293px;width:211px;height:20px;background:#ffffe1;box-sizing:border-box;border:1px solid #767676;box-shadow:2px 2px 2px rgba(0,0,0,0.35)"></div>
<div class="t " style="left:860px;top:297.69px;font-size:11px;line-height:11px;letter-spacing:0.323px;">Изменить название варианта расчета</div>
<div style="left:0px;top:984px;width:1280px;height:40px;background:#053a4f"></div>
<div style="left:392px;top:984px;width:48px;height:40px;background:#0e6480"></div>
<div style="left:249px;top:1022px;width:40px;height:2px;background:#99d9ea"></div>
<div style="left:298px;top:1022px;width:40px;height:2px;background:#99d9ea"></div>
<div style="left:347px;top:1022px;width:40px;height:2px;background:#99d9ea"></div>
<div style="left:392px;top:1022px;width:48px;height:2px;background:#99d9ea"></div>
<svg style="position:absolute;left:16px;top:996px;" width="17" height="17" viewBox="0 0 17 17"><path d="M0 2.3l7-1v7H0zM8 1.1l9-1.3V8H8zM0 9h7v7L0 15zM8 9h9v8l-9-1.2z" fill="#fff"/></svg>
<svg style="position:absolute;left:63px;top:995px;" width="18" height="18" viewBox="0 0 18 18"><circle cx="10.5" cy="6.5" r="5.5" fill="none" stroke="#fff" stroke-width="1.3"/><path d="M6.5 10.5L1 16" stroke="#fff" stroke-width="1.5"/></svg>
<svg style="position:absolute;left:110px;top:996px;" width="21" height="16" viewBox="0 0 21 16"><rect x="4.5" y="1.5" width="12" height="13" fill="none" stroke="#fff" stroke-width="1.3"/><path d="M2.5 3.5h-1v9h1M18.5 3.5h1v9h-1" fill="none" stroke="#fff" stroke-width="1.2"/></svg>
<svg style="position:absolute;left:160px;top:995px;" width="22" height="19" viewBox="0 0 22 19"><path d="M0.5 2.5h7l2 2h12v14h-21z" fill="#f8d775" stroke="#e0b040"/><path d="M0.5 6.5h21v12h-21z" fill="#fae39a"/><path d="M7 13h8v5h-2v-3h-4v3H7z" fill="#3aa0e0"/></svg>
<svg style="position:absolute;left:209px;top:995px;" width="22" height="20" viewBox="0 0 22 20"><rect x="0.5" y="0.5" width="21" height="19" rx="2" fill="#3a68c8"/><rect x="5" y="1" width="12" height="6" fill="#e8e8e8"/><rect x="3" y="10" width="16" height="9" fill="#f0f0f0"/><path d="M4 12h14M4 14.5h14M4 17h14" stroke="#d04050" stroke-width="1.3"/></svg>
<svg style="position:absolute;left:258px;top:995px;" width="23" height="20" viewBox="0 0 23 20"><rect x="0" y="1" width="14" height="18" fill="#2b579a"/><rect x="10" y="3" width="12" height="15" fill="#fff" stroke="#aab"/><path d="M12 6h8M12 9h8M12 12h8M12 15h8" stroke="#2b579a"/><text x="2" y="14" font-family="Liberation Sans" font-weight="bold" font-size="9" fill="#fff">W</text></svg>
<svg style="position:absolute;left:306px;top:995px;" width="23" height="21" viewBox="0 0 23 21"><ellipse cx="11.5" cy="10.5" rx="11" ry="10.5" fill="#d81a22"/><ellipse cx="11.5" cy="10.5" rx="4.3" ry="8" fill="#0b3a4e"/></svg>
<svg style="position:absolute;left:356px;top:995px;" width="23" height="21" viewBox="0 0 23 21"><circle cx="11.5" cy="10.5" r="10" fill="#c8a050"/><circle cx="10" cy="8" r="7" fill="#d8e8f0"/><path d="M1 6c4 0 8 0 10 3M2 10c4 0 7 0 9 2M4 14c3 0 5-1 7-2M22 4c-4 1-7 6-8 12" fill="none" stroke="#2a7ac0" stroke-width="2"/></svg>
<svg style="position:absolute;left:404px;top:994px;" width="24" height="24" viewBox="0 0 24 24"><circle cx="12" cy="12" r="11" fill="#22c83e" stroke="#c0f4cc" stroke-width="1.4"/><path d="M5 8.5h14.5M7 12.3h6M7 15.5h6" stroke="#102028" stroke-width="2.3"/><path d="M19 8.5l-5 11" stroke="#102028" stroke-width="2.8"/></svg>
<svg style="position:absolute;left:987px;top:999px;" width="12" height="8" viewBox="0 0 12 8"><path d="M0.5 7.5l5.5-6 5.5 6" fill="none" stroke="#fff" stroke-width="1.2"/></svg>
<svg style="position:absolute;left:1009px;top:996px;" width="16" height="16" viewBox="0 0 16 16"><rect x="0" y="0" width="16" height="16" fill="#f0e8f8"/><circle cx="8" cy="8" r="6.5" fill="#a020c0"/><path d="M8 3v5h4" fill="none" stroke="#fff" stroke-width="1.4"/></svg>
<svg style="position:absolute;left:1033px;top:996px;" width="16" height="16" viewBox="0 0 16 16"><rect x="0" y="0" width="16" height="16" fill="#e8f4e0"/><circle cx="9" cy="3.5" r="2" fill="#2a9a2a"/><path d="M2 6c4 2 8 1 12-3M8 6l-2 9M7 10l5 4" fill="none" stroke="#2a9a2a" stroke-width="2"/></svg>
<svg style="position:absolute;left:1057px;top:996px;" width="16" height="16" viewBox="0 0 16 16"><circle cx="8" cy="8" r="7.5" fill="#1ab0b0"/><path d="M4.5 8.5h7a3.5 3.5 0 1 0-1 2.5" fill="none" stroke="#fff" stroke-width="2"/></svg>
<svg style="position:absolute;left:1081px;top:999px;" width="17" height="13" viewBox="0 0 17 13"><rect x="4.5" y="0.5" width="12" height="8" fill="none" stroke="#fff"/><path d="M10.5 8.5v3M7 12.5h7" stroke="#fff"/><rect x="0.5" y="0.5" width="3" height="4" fill="none" stroke="#fff"/></svg>
<svg style="position:absolute;left:1105px;top:998px;" width="18" height="15" viewBox="0 0 18 15"><path d="M0.5 4.5h3l4-4v13l-4-4h-3z" fill="none" stroke="#fff"/><circle cx="12.5" cy="10" r="4.5" fill="#e02020"/><path d="M10.5 8l4 4M14.5 8l-4 4" stroke="#fff" stroke-width="1.2"/></svg>
<div class="t " style="left:1132px;top:999.19px;font-size:11px;line-height:11px;letter-spacing:-0.144px;color:#fff">РУС</div>
<div class="t " style="left:1182.4px;top:989.69px;font-size:11px;line-height:11px;letter-spacing:-0.030px;color:#fff">9:15</div>
<div class="t " style="left:1167.2px;top:1007.19px;font-size:11px;line-height:11px;letter-spacing:-0.035px;color:#fff">15.11.2016</div>
<svg style="position:absolute;left:1239px;top:1001px;" width="17" height="15" viewBox="0 0 17 15"><path d="M0.5 0.5h16v10h-6l-2 3-2-3h-6z" fill="none" stroke="#fff" stroke-width="1.1"/></svg>
<div style="left:1275px;top:984px;width:1px;height:40px;background:#3a6070"></div>
</body></html>
